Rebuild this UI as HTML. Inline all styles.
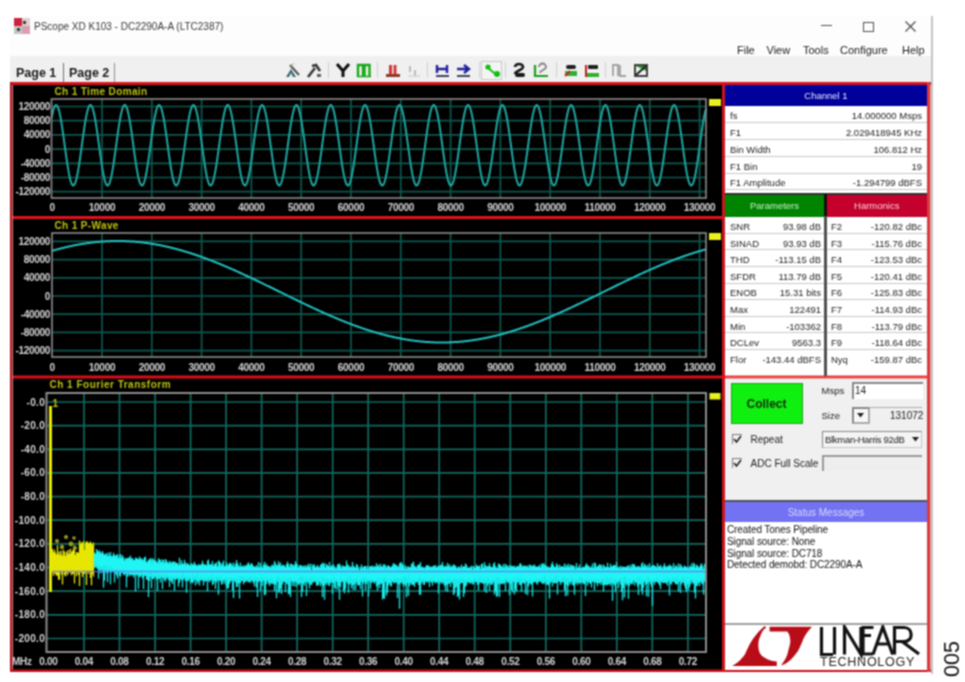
<!DOCTYPE html>
<html><head><meta charset="utf-8">
<style>
html,body{margin:0;padding:0;background:#fff;width:965px;height:682px;overflow:hidden;position:relative;font-family:"Liberation Sans", sans-serif;}
.abs{position:absolute}
svg text{font-family:"Liberation Sans", sans-serif;}
.al{font-size:10px;font-weight:bold;fill:#d4d4d4;letter-spacing:-0.3px}
.ttl{font-size:10px;font-weight:bold;fill:#c0c010;letter-spacing:0.37px}
.hdr{position:absolute;color:#e8e8ff;font-size:9.5px;text-align:center;display:flex;align-items:center;justify-content:center;}
.row,.row2{position:absolute;background:#fff;border-bottom:1px solid #c8c8c8;box-sizing:border-box;font-size:9.5px;color:#1c1c1c;}
.row2{border-bottom:none}
.row span,.row2 span{position:absolute;top:50%;transform:translateY(-38%);white-space:nowrap}
.menu{position:absolute;font-size:11px;color:#202020;white-space:nowrap}
</style></head><body>
<svg width="0" height="0" style="position:absolute"><filter id="bl" x="0" y="0" width="100%" height="100%" color-interpolation-filters="sRGB"><feConvolveMatrix order="3" kernelMatrix="1 2 1 2 4 2 1 2 1" divisor="16" edgeMode="duplicate"/></filter></svg>
<div id="wrap" style="position:absolute;left:0;top:0;width:965px;height:682px;overflow:hidden;background:#fff;filter:url(#bl)">
<div class="abs" style="left:10px;top:15px;width:921px;height:41px;background:#fdfdfd"></div>
<div class="abs" style="left:10px;top:56px;width:921px;height:26px;background:#f0f0f0"></div>
<div class="abs" style="left:931px;top:16px;width:2px;height:658px;background:#c4c4c4"></div>
<svg class="abs" style="left:14px;top:18px" width="16" height="16"><rect x="0" y="0" width="16" height="16" fill="#c8c8c8"/><rect x="0" y="0" width="8" height="8" fill="#d02040"/><rect x="8" y="0" width="8" height="8" fill="#e0d0d0"/><rect x="0" y="8" width="8" height="8" fill="#c0c8c0"/><rect x="8" y="8" width="8" height="8" fill="#d8a0b0"/><rect x="9" y="3" width="3" height="3" fill="#404040"/><rect x="3" y="10" width="3" height="3" fill="#404040"/></svg><div class="menu" style="left:34px;top:21px;font-size:10px;color:#383838">PScope XD K103 - DC2290A-A (LTC2387)</div><div class="abs" style="left:821px;top:25px;width:11px;height:1.2px;background:#505050"></div><div class="abs" style="left:862.5px;top:22px;width:9px;height:8px;border:1.2px solid #505050"></div><svg class="abs" style="left:904px;top:21px" width="13" height="11"><path d="M1.5 0.5L11.5 10.5M11.5 0.5L1.5 10.5" stroke="#505050" stroke-width="1.3"/></svg><div class="menu" style="left:737px;top:44px">File</div><div class="menu" style="left:766.5px;top:44px">View</div><div class="menu" style="left:803px;top:44px">Tools</div><div class="menu" style="left:840px;top:44px">Configure</div><div class="menu" style="left:902px;top:44px">Help</div><div class="menu" style="left:16px;top:66px;font-size:12.5px;font-weight:bold;color:#1a1a1a">Page 1</div><div class="abs" style="left:62.5px;top:63px;width:1.5px;height:19px;background:#707070"></div><div class="menu" style="left:69px;top:66px;font-size:12.5px;font-weight:bold;color:#1a1a1a">Page 2</div><div class="abs" style="left:113.5px;top:63px;width:1.5px;height:19px;background:#909090"></div><svg class="abs" style="left:285px;top:62px" width="16" height="16"><path d="M1 15L6 7L11 15z" fill="#3a6a70"/><path d="M4 15L6 11L8 15z" fill="#f0f0f0"/><path d="M5 3L14 13" stroke="#505050" stroke-width="2"/><path d="M9 1L5 6" stroke="#c0a0a0" stroke-width="1"/></svg><svg class="abs" style="left:306px;top:62px" width="16" height="16"><path d="M2 15L9 6" stroke="#383838" stroke-width="2.6"/><path d="M6 4L10 3L14 9" stroke="#383838" stroke-width="2.6" fill="none"/><rect x="11" y="12" width="4" height="3" fill="#606060"/></svg><div class="abs" style="left:328px;top:62px;width:1px;height:16px;background:#d0d0d0"></div><svg class="abs" style="left:334.5px;top:62px" width="16" height="16"><path d="M2 2L8 9L14 2M8 9V15" stroke="#101010" stroke-width="3" fill="none"/></svg><svg class="abs" style="left:355.5px;top:62px" width="16" height="16"><path d="M2 15V3h5v12M8.5 15V3h5v12" stroke="#18a818" stroke-width="2.4" fill="none"/><path d="M1 14.5h14" stroke="#18a818" stroke-width="1.5"/></svg><div class="abs" style="left:377px;top:62px;width:1px;height:16px;background:#d0d0d0"></div><svg class="abs" style="left:384.5px;top:62px" width="16" height="16"><path d="M5.5 13V3M10 13V3" stroke="#d03838" stroke-width="3"/><rect x="1" y="12" width="14" height="3" fill="#903828"/></svg><svg class="abs" style="left:406px;top:62px" width="16" height="16"><path d="M4 4v6M9 8v6" stroke="#b0b0b0" stroke-width="1.6"/><path d="M2 14h12" stroke="#c8c8c8" stroke-width="1"/></svg><div class="abs" style="left:427px;top:62px;width:1px;height:16px;background:#d0d0d0"></div><svg class="abs" style="left:435px;top:62px" width="16" height="16"><path d="M2 3v8M12 3v8M2 7h10" stroke="#2020a0" stroke-width="2.4"/><path d="M1 14h13" stroke="#404060" stroke-width="2"/></svg><svg class="abs" style="left:456px;top:62px" width="16" height="16"><path d="M1 7h11M8 3l5 4l-5 4" stroke="#2020a0" stroke-width="2.4" fill="none"/><path d="M1 14h13" stroke="#404060" stroke-width="2"/></svg><div class="abs" style="left:478.5px;top:62px;width:1px;height:16px;background:#d0d0d0"></div><div class="abs" style="left:480.5px;top:60.5px;width:19px;height:17px;border:1px solid #c8c8c8;background:#f4f4f4"></div><svg class="abs" style="left:485px;top:62px" width="16" height="16"><path d="M2 5L9 11L14 13" stroke="#10c010" stroke-width="2" fill="none"/><circle cx="3" cy="5" r="2.6" fill="#10c010"/><circle cx="12" cy="12" r="3" fill="#10c010"/></svg><div class="abs" style="left:505px;top:62px;width:1px;height:16px;background:#d0d0d0"></div><svg class="abs" style="left:513px;top:62px" width="16" height="16"><path d="M2 5a4 3 0 0 1 8 0c0 3-8 4-8 7" stroke="#181818" stroke-width="2.6" fill="none"/><rect x="2" y="11" width="10" height="4" rx="2" fill="#181818"/></svg><svg class="abs" style="left:533px;top:62px" width="16" height="16"><path d="M2 3V14h13" stroke="#18a018" stroke-width="2.2" fill="none"/><path d="M6 5a3 3 0 0 1 7 0c0 3-6 3-6 6" stroke="#808080" stroke-width="1.8" fill="none"/></svg><div class="abs" style="left:556px;top:62px;width:1px;height:16px;background:#d0d0d0"></div><svg class="abs" style="left:563px;top:62px" width="16" height="16"><rect x="3" y="3" width="10" height="4" rx="2" fill="#202020"/><rect x="2" y="9" width="12" height="5" fill="#30b030"/><path d="M2 14L7 9" stroke="#d02020" stroke-width="2"/></svg><svg class="abs" style="left:584px;top:62px" width="16" height="16"><path d="M2 3V15" stroke="#c02020" stroke-width="2"/><rect x="4" y="3" width="10" height="4" rx="1" fill="#202020"/><rect x="3" y="11" width="12" height="4" fill="#30b030"/></svg><div class="abs" style="left:605px;top:62px;width:1px;height:16px;background:#d0d0d0"></div><svg class="abs" style="left:612px;top:62px" width="16" height="16"><path d="M1 14V3h5v11M8 3v11h6" stroke="#a0a0a0" stroke-width="1.8" fill="none"/></svg><svg class="abs" style="left:633px;top:62px" width="16" height="16"><rect x="1" y="2" width="14" height="13" fill="#404040"/><rect x="3" y="4" width="10" height="9" fill="#f0f0f0"/><path d="M3 4h10v5z" fill="#20a020"/><path d="M3 13L13 4" stroke="#202020" stroke-width="2"/></svg>
<svg width="965" height="682" style="position:absolute;left:0;top:0"><rect x="13" y="85" width="709" height="585" fill="#000"/><line x1="51.5" y1="106.5" x2="706" y2="106.5" stroke="#0d584e" stroke-width="1.7"/><line x1="51.5" y1="120.7" x2="706" y2="120.7" stroke="#0d584e" stroke-width="1.7"/><line x1="51.5" y1="134.9" x2="706" y2="134.9" stroke="#0d584e" stroke-width="1.7"/><line x1="51.5" y1="149.1" x2="706" y2="149.1" stroke="#0d584e" stroke-width="1.7"/><line x1="51.5" y1="163.3" x2="706" y2="163.3" stroke="#0d584e" stroke-width="1.7"/><line x1="51.5" y1="177.5" x2="706" y2="177.5" stroke="#0d584e" stroke-width="1.7"/><line x1="51.5" y1="191.7" x2="706" y2="191.7" stroke="#0d584e" stroke-width="1.7"/><line x1="102" y1="99" x2="102" y2="198" stroke="#0d584e" stroke-width="1.7"/><line x1="151.8" y1="99" x2="151.8" y2="198" stroke="#0d584e" stroke-width="1.7"/><line x1="201.6" y1="99" x2="201.6" y2="198" stroke="#0d584e" stroke-width="1.7"/><line x1="251.4" y1="99" x2="251.4" y2="198" stroke="#0d584e" stroke-width="1.7"/><line x1="301.2" y1="99" x2="301.2" y2="198" stroke="#0d584e" stroke-width="1.7"/><line x1="351" y1="99" x2="351" y2="198" stroke="#0d584e" stroke-width="1.7"/><line x1="400.8" y1="99" x2="400.8" y2="198" stroke="#0d584e" stroke-width="1.7"/><line x1="450.6" y1="99" x2="450.6" y2="198" stroke="#0d584e" stroke-width="1.7"/><line x1="500.4" y1="99" x2="500.4" y2="198" stroke="#0d584e" stroke-width="1.7"/><line x1="550.2" y1="99" x2="550.2" y2="198" stroke="#0d584e" stroke-width="1.7"/><line x1="600" y1="99" x2="600" y2="198" stroke="#0d584e" stroke-width="1.7"/><line x1="649.8" y1="99" x2="649.8" y2="198" stroke="#0d584e" stroke-width="1.7"/><line x1="699.6" y1="99" x2="699.6" y2="198" stroke="#0d584e" stroke-width="1.7"/><polyline points="51.5,118.5 52,115.9 52.5,113.5 53,111.4 53.5,109.6 54,108 54.5,106.8 55,105.9 55.5,105.3 56,105.1 56.5,105.2 57,105.6 57.5,106.4 58,107.5 58.5,108.9 59,110.6 59.5,112.6 60,114.9 60.5,117.4 61,120.2 61.5,123.2 62,126.3 62.5,129.7 63,133.1 63.5,136.7 64,140.3 64.5,144 65,147.6 65.5,151.3 66,154.9 66.5,158.4 67,161.8 67.5,165.1 68,168.2 68.5,171.2 69,173.9 69.5,176.3 70,178.5 70.5,180.5 71,182.1 71.5,183.4 72,184.4 72.5,185.1 73,185.5 73.5,185.5 74,185.1 74.5,184.5 75,183.5 75.5,182.2 76,180.6 76.5,178.7 77,176.5 77.5,174 78,171.3 78.5,168.4 79,165.3 79.5,162 80,158.6 80.5,155.1 81,151.5 81.5,147.9 82,144.2 82.5,140.5 83,136.9 83.5,133.3 84,129.9 84.5,126.5 85,123.4 85.5,120.4 86,117.6 86.5,115.1 87,112.8 87.5,110.7 88,109 88.5,107.6 89,106.5 89.5,105.7 90,105.2 90.5,105.1 91,105.3 91.5,105.9 92,106.7 92.5,108 93,109.5 93.5,111.3 94,113.4 94.5,115.7 95,118.4 95.5,121.2 96,124.2 96.5,127.5 97,130.8 97.5,134.3 98,137.9 98.5,141.5 99,145.2 99.5,148.9 100,152.5 100.5,156.1 101,159.6 101.5,163 102,166.2 102.5,169.3 103,172.1 103.5,174.7 104,177.1 104.5,179.2 105,181.1 105.5,182.6 106,183.8 106.5,184.7 107,185.3 107.5,185.5 108,185.4 108.5,184.9 109,184.2 109.5,183.1 110,181.7 110.5,180 111,177.9 111.5,175.7 112,173.1 112.5,170.4 113,167.4 113.5,164.2 114,160.9 114.5,157.4 115,153.9 115.5,150.3 116,146.6 116.5,142.9 117,139.3 117.5,135.7 118,132.1 118.5,128.7 119,125.4 119.5,122.3 120,119.4 120.5,116.7 121,114.2 121.5,112 122,110.1 122.5,108.5 123,107.2 123.5,106.2 124,105.5 124.5,105.1 125,105.1 125.5,105.5 126,106.1 126.5,107.1 127,108.4 127.5,110 128,112 128.5,114.2 129,116.6 129.5,119.3 130,122.2 130.5,125.3 131,128.6 131.5,132 132,135.5 132.5,139.1 133,142.8 133.5,146.5 134,150.1 134.5,153.8 135,157.3 135.5,160.8 136,164.1 136.5,167.3 137,170.2 137.5,173 138,175.6 138.5,177.9 139,179.9 139.5,181.6 140,183 140.5,184.1 141,184.9 141.5,185.4 142,185.5 142.5,185.3 143,184.7 143.5,183.8 144,182.6 144.5,181.1 145,179.3 145.5,177.2 146,174.8 146.5,172.2 147,169.4 147.5,166.3 148,163.1 148.5,159.7 149,156.3 149.5,152.7 150,149 150.5,145.4 151,141.7 151.5,138 152,134.5 152.5,131 153,127.6 153.5,124.4 154,121.3 154.5,118.5 155,115.8 155.5,113.5 156,111.4 156.5,109.5 157,108 157.5,106.8 158,105.9 158.5,105.3 159,105.1 159.5,105.2 160,105.7 160.5,106.4 161,107.5 161.5,108.9 162,110.7 162.5,112.7 163,115 163.5,117.5 164,120.3 164.5,123.2 165,126.4 165.5,129.7 166,133.2 166.5,136.7 167,140.4 167.5,144 168,147.7 168.5,151.4 169,155 169.5,158.5 170,161.9 170.5,165.2 171,168.3 171.5,171.2 172,173.9 172.5,176.4 173,178.6 173.5,180.5 174,182.1 174.5,183.4 175,184.4 175.5,185.1 176,185.5 176.5,185.5 177,185.1 177.5,184.5 178,183.5 178.5,182.2 179,180.5 179.5,178.6 180,176.4 180.5,174 181,171.3 181.5,168.4 182,165.3 182.5,162 183,158.6 183.5,155 184,151.4 184.5,147.8 185,144.1 185.5,140.4 186,136.8 186.5,133.3 187,129.8 187.5,126.5 188,123.3 188.5,120.3 189,117.6 189.5,115 190,112.7 190.5,110.7 191,109 191.5,107.6 192,106.5 192.5,105.7 193,105.2 193.5,105.1 194,105.3 194.5,105.9 195,106.8 195.5,108 196,109.5 196.5,111.3 197,113.4 197.5,115.8 198,118.4 198.5,121.3 199,124.3 199.5,127.5 200,130.9 200.5,134.4 201,138 201.5,141.6 202,145.3 202.5,149 203,152.6 203.5,156.2 204,159.7 204.5,163 205,166.3 205.5,169.3 206,172.2 206.5,174.8 207,177.2 207.5,179.3 208,181.1 208.5,182.6 209,183.8 209.5,184.7 210,185.3 210.5,185.5 211,185.4 211.5,184.9 212,184.2 212.5,183.1 213,181.6 213.5,179.9 214,177.9 214.5,175.6 215,173.1 215.5,170.3 216,167.3 216.5,164.2 217,160.8 217.5,157.4 218,153.8 218.5,150.2 219,146.5 219.5,142.9 220,139.2 220.5,135.6 221,132.1 221.5,128.7 222,125.4 222.5,122.3 223,119.4 223.5,116.7 224,114.2 224.5,112 225,110.1 225.5,108.5 226,107.1 226.5,106.1 227,105.5 227.5,105.1 228,105.1 228.5,105.5 229,106.1 229.5,107.1 230,108.5 230.5,110.1 231,112 231.5,114.2 232,116.7 232.5,119.4 233,122.3 233.5,125.4 234,128.7 234.5,132.1 235,135.6 235.5,139.2 236,142.9 236.5,146.5 237,150.2 237.5,153.8 238,157.4 238.5,160.8 239,164.2 239.5,167.3 240,170.3 240.5,173.1 241,175.6 241.5,177.9 242,179.9 242.5,181.6 243,183.1 243.5,184.2 244,184.9 244.5,185.4 245,185.5 245.5,185.3 246,184.7 246.5,183.8 247,182.6 247.5,181.1 248,179.3 248.5,177.2 249,174.8 249.5,172.2 250,169.3 250.5,166.3 251,163 251.5,159.7 252,156.2 252.5,152.6 253,149 253.5,145.3 254,141.6 254.5,138 255,134.4 255.5,130.9 256,127.5 256.5,124.3 257,121.3 257.5,118.4 258,115.8 258.5,113.4 259,111.3 259.5,109.5 260,108 260.5,106.8 261,105.9 261.5,105.3 262,105.1 262.5,105.2 263,105.7 263.5,106.5 264,107.6 264.5,109 265,110.7 265.5,112.7 266,115 266.5,117.6 267,120.3 267.5,123.3 268,126.5 268.5,129.8 269,133.3 269.5,136.8 270,140.4 270.5,144.1 271,147.8 271.5,151.4 272,155 272.5,158.6 273,162 273.5,165.3 274,168.4 274.5,171.3 275,174 275.5,176.4 276,178.6 276.5,180.5 277,182.2 277.5,183.5 278,184.5 278.5,185.1 279,185.5 279.5,185.5 280,185.1 280.5,184.4 281,183.4 281.5,182.1 282,180.5 282.5,178.6 283,176.4 283.5,173.9 284,171.2 284.5,168.3 285,165.2 285.5,161.9 286,158.5 286.5,155 287,151.4 287.5,147.7 288,144 288.5,140.4 289,136.7 289.5,133.2 290,129.7 290.5,126.4 291,123.2 291.5,120.3 292,117.5 292.5,115 293,112.7 293.5,110.7 294,108.9 294.5,107.5 295,106.4 295.5,105.7 296,105.2 296.5,105.1 297,105.3 297.5,105.9 298,106.8 298.5,108 299,109.5 299.5,111.4 300,113.5 300.5,115.8 301,118.5 301.5,121.3 302,124.4 302.5,127.6 303,131 303.5,134.5 304,138 304.5,141.7 305,145.4 305.5,149 306,152.7 306.5,156.3 307,159.7 307.5,163.1 308,166.3 308.5,169.4 309,172.2 309.5,174.8 310,177.2 310.5,179.3 311,181.1 311.5,182.6 312,183.8 312.5,184.7 313,185.3 313.5,185.5 314,185.4 314.5,184.9 315,184.1 315.5,183 316,181.6 316.5,179.9 317,177.9 317.5,175.6 318,173 318.5,170.2 319,167.3 319.5,164.1 320,160.8 320.5,157.3 321,153.8 321.5,150.1 322,146.5 322.5,142.8 323,139.1 323.5,135.5 324,132 324.5,128.6 325,125.3 325.5,122.2 326,119.3 326.5,116.6 327,114.2 327.5,112 328,110 328.5,108.4 329,107.1 329.5,106.1 330,105.5 330.5,105.1 331,105.1 331.5,105.5 332,106.2 332.5,107.2 333,108.5 333.5,110.1 334,112 334.5,114.2 335,116.7 335.5,119.4 336,122.3 336.5,125.4 337,128.7 337.5,132.1 338,135.7 338.5,139.3 339,142.9 339.5,146.6 340,150.3 340.5,153.9 341,157.4 341.5,160.9 342,164.2 342.5,167.4 343,170.4 343.5,173.1 344,175.7 344.5,177.9 345,180 345.5,181.7 346,183.1 346.5,184.2 347,184.9 347.5,185.4 348,185.5 348.5,185.3 349,184.7 349.5,183.8 350,182.6 350.5,181.1 351,179.2 351.5,177.1 352,174.7 352.5,172.1 353,169.3 353.5,166.2 354,163 354.5,159.6 355,156.1 355.5,152.5 356,148.9 356.5,145.2 357,141.5 357.5,137.9 358,134.3 358.5,130.8 359,127.5 359.5,124.2 360,121.2 360.5,118.4 361,115.7 361.5,113.4 362,111.3 362.5,109.5 363,108 363.5,106.7 364,105.9 364.5,105.3 365,105.1 365.5,105.2 366,105.7 366.5,106.5 367,107.6 367.5,109 368,110.7 368.5,112.8 369,115.1 369.5,117.6 370,120.4 370.5,123.4 371,126.5 371.5,129.9 372,133.3 372.5,136.9 373,140.5 373.5,144.2 374,147.9 374.5,151.5 375,155.1 375.5,158.6 376,162 376.5,165.3 377,168.4 377.5,171.3 378,174 378.5,176.5 379,178.7 379.5,180.6 380,182.2 380.5,183.5 381,184.5 381.5,185.1 382,185.5 382.5,185.5 383,185.1 383.5,184.4 384,183.4 384.5,182.1 385,180.5 385.5,178.5 386,176.3 386.5,173.9 387,171.2 387.5,168.2 388,165.1 388.5,161.8 389,158.4 389.5,154.9 390,151.3 390.5,147.6 391,144 391.5,140.3 392,136.7 392.5,133.1 393,129.7 393.5,126.3 394,123.2 394.5,120.2 395,117.4 395.5,114.9 396,112.6 396.5,110.6 397,108.9 397.5,107.5 398,106.4 398.5,105.6 399,105.2 399.5,105.1 400,105.3 400.5,105.9 401,106.8 401.5,108 402,109.6 402.5,111.4 403,113.5 403.5,115.9 404,118.5 404.5,121.4 405,124.4 405.5,127.7 406,131 406.5,134.5 407,138.1 407.5,141.8 408,145.4 408.5,149.1 409,152.7 409.5,156.3 410,159.8 410.5,163.2 411,166.4 411.5,169.4 412,172.3 412.5,174.9 413,177.2 413.5,179.3 414,181.2 414.5,182.7 415,183.9 415.5,184.7 416,185.3 416.5,185.5 417,185.4 417.5,184.9 418,184.1 418.5,183 419,181.6 419.5,179.8 420,177.8 420.5,175.5 421,173 421.5,170.2 422,167.2 422.5,164 423,160.7 423.5,157.2 424,153.7 424.5,150.1 425,146.4 425.5,142.7 426,139.1 426.5,135.5 427,131.9 427.5,128.5 428,125.3 428.5,122.2 429,119.2 429.5,116.6 430,114.1 430.5,111.9 431,110 431.5,108.4 432,107.1 432.5,106.1 433,105.5 433.5,105.1 434,105.1 434.5,105.5 435,106.2 435.5,107.2 436,108.5 436.5,110.2 437,112.1 437.5,114.3 438,116.8 438.5,119.5 439,122.4 439.5,125.5 440,128.8 440.5,132.2 441,135.7 441.5,139.3 442,143 442.5,146.7 443,150.3 443.5,154 444,157.5 444.5,161 445,164.3 445.5,167.4 446,170.4 446.5,173.2 447,175.7 447.5,178 448,180 448.5,181.7 449,183.1 449.5,184.2 450,185 450.5,185.4 451,185.5 451.5,185.3 452,184.7 452.5,183.8 453,182.6 453.5,181 454,179.2 454.5,177.1 455,174.7 455.5,172 456,169.2 456.5,166.1 457,162.9 457.5,159.5 458,156 458.5,152.5 459,148.8 459.5,145.1 460,141.5 460.5,137.8 461,134.2 461.5,130.8 462,127.4 462.5,124.2 463,121.1 463.5,118.3 464,115.7 464.5,113.3 465,111.2 465.5,109.4 466,107.9 466.5,106.7 467,105.9 467.5,105.3 468,105.1 468.5,105.2 469,105.7 469.5,106.5 470,107.6 470.5,109 471,110.8 471.5,112.8 472,115.1 472.5,117.7 473,120.4 473.5,123.4 474,126.6 474.5,129.9 475,133.4 475.5,137 476,140.6 476.5,144.3 477,147.9 477.5,151.6 478,155.2 478.5,158.7 479,162.1 479.5,165.4 480,168.5 480.5,171.4 481,174.1 481.5,176.5 482,178.7 482.5,180.6 483,182.2 483.5,183.5 484,184.5 484.5,185.1 485,185.5 485.5,185.4 486,185.1 486.5,184.4 487,183.4 487.5,182.1 488,180.4 488.5,178.5 489,176.3 489.5,173.8 490,171.1 490.5,168.2 491,165.1 491.5,161.8 492,158.4 492.5,154.8 493,151.2 493.5,147.6 494,143.9 494.5,140.2 495,136.6 495.5,133 496,129.6 496.5,126.3 497,123.1 497.5,120.2 498,117.4 498.5,114.9 499,112.6 499.5,110.6 500,108.9 500.5,107.5 501,106.4 501.5,105.6 502,105.2 502.5,105.1 503,105.4 503.5,105.9 504,106.8 504.5,108.1 505,109.6 505.5,111.4 506,113.6 506.5,115.9 507,118.6 507.5,121.4 508,124.5 508.5,127.7 509,131.1 509.5,134.6 510,138.2 510.5,141.8 511,145.5 511.5,149.2 512,152.8 512.5,156.4 513,159.9 513.5,163.2 514,166.5 514.5,169.5 515,172.3 515.5,174.9 516,177.3 516.5,179.4 517,181.2 517.5,182.7 518,183.9 518.5,184.8 519,185.3 519.5,185.5 520,185.4 520.5,184.9 521,184.1 521.5,183 522,181.5 522.5,179.8 523,177.8 523.5,175.5 524,172.9 524.5,170.1 525,167.1 525.5,164 526,160.6 526.5,157.2 527,153.6 527.5,150 528,146.3 528.5,142.6 529,139 529.5,135.4 530,131.9 530.5,128.5 531,125.2 531.5,122.1 532,119.2 532.5,116.5 533,114.1 533.5,111.9 534,110 534.5,108.4 535,107.1 535.5,106.1 536,105.4 536.5,105.1 537,105.2 537.5,105.5 538,106.2 538.5,107.2 539,108.5 539.5,110.2 540,112.1 540.5,114.3 541,116.8 541.5,119.5 542,122.5 542.5,125.6 543,128.9 543.5,132.3 544,135.8 544.5,139.4 545,143.1 545.5,146.8 546,150.4 546.5,154 547,157.6 547.5,161 548,164.4 548.5,167.5 549,170.5 549.5,173.2 550,175.8 550.5,178 551,180 551.5,181.7 552,183.1 552.5,184.2 553,185 553.5,185.4 554,185.5 554.5,185.2 555,184.7 555.5,183.8 556,182.5 556.5,181 557,179.1 557.5,177 558,174.6 558.5,172 559,169.1 559.5,166.1 560,162.8 560.5,159.5 561,156 561.5,152.4 562,148.7 562.5,145.1 563,141.4 563.5,137.7 564,134.2 564.5,130.7 565,127.3 565.5,124.1 566,121.1 566.5,118.3 567,115.6 567.5,113.3 568,111.2 568.5,109.4 569,107.9 569.5,106.7 570,105.8 570.5,105.3 571,105.1 571.5,105.2 572,105.7 572.5,106.5 573,107.6 573.5,109.1 574,110.8 574.5,112.9 575,115.2 575.5,117.7 576,120.5 576.5,123.5 577,126.7 577.5,130 578,133.5 578.5,137 579,140.7 579.5,144.3 580,148 580.5,151.7 581,155.3 581.5,158.8 582,162.2 582.5,165.4 583,168.5 583.5,171.4 584,174.1 584.5,176.6 585,178.7 585.5,180.6 586,182.2 586.5,183.5 587,184.5 587.5,185.2 588,185.5 588.5,185.4 589,185.1 589.5,184.4 590,183.4 590.5,182 591,180.4 591.5,178.5 592,176.2 592.5,173.8 593,171 593.5,168.1 594,165 594.5,161.7 595,158.3 595.5,154.8 596,151.1 596.5,147.5 597,143.8 597.5,140.1 598,136.5 598.5,133 599,129.5 599.5,126.2 600,123.1 600.5,120.1 601,117.3 601.5,114.8 602,112.5 602.5,110.6 603,108.9 603.5,107.5 604,106.4 604.5,105.6 605,105.2 605.5,105.1 606,105.4 606.5,105.9 607,106.9 607.5,108.1 608,109.6 608.5,111.5 609,113.6 609.5,116 610,118.6 610.5,121.5 611,124.6 611.5,127.8 612,131.2 612.5,134.7 613,138.3 613.5,141.9 614,145.6 614.5,149.2 615,152.9 615.5,156.5 616,159.9 616.5,163.3 617,166.5 617.5,169.5 618,172.4 618.5,175 619,177.3 619.5,179.4 620,181.2 620.5,182.7 621,183.9 621.5,184.8 622,185.3 622.5,185.5 623,185.4 623.5,184.9 624,184.1 624.5,183 625,181.5 625.5,179.8 626,177.7 626.5,175.4 627,172.9 627.5,170.1 628,167.1 628.5,163.9 629,160.6 629.5,157.1 630,153.5 630.5,149.9 631,146.2 631.5,142.6 632,138.9 632.5,135.3 633,131.8 633.5,128.4 634,125.1 634.5,122 635,119.1 635.5,116.5 636,114 636.5,111.8 637,109.9 637.5,108.3 638,107.1 638.5,106.1 639,105.4 639.5,105.1 640,105.2 640.5,105.5 641,106.2 641.5,107.2 642,108.6 642.5,110.2 643,112.2 643.5,114.4 644,116.9 644.5,119.6 645,122.5 645.5,125.6 646,128.9 646.5,132.3 647,135.9 647.5,139.5 648,143.1 648.5,146.8 649,150.5 649.5,154.1 650,157.7 650.5,161.1 651,164.4 651.5,167.6 652,170.5 652.5,173.3 653,175.8 653.5,178.1 654,180.1 654.5,181.8 655,183.2 655.5,184.2 656,185 656.5,185.4 657,185.5 657.5,185.2 658,184.7 658.5,183.7 659,182.5 659.5,180.9 660,179.1 660.5,177 661,174.6 661.5,171.9 662,169.1 662.5,166 663,162.8 663.5,159.4 664,155.9 664.5,152.3 665,148.7 665.5,145 666,141.3 666.5,137.7 667,134.1 667.5,130.6 668,127.3 668.5,124.1 669,121 669.5,118.2 670,115.6 670.5,113.2 671,111.2 671.5,109.4 672,107.9 672.5,106.7 673,105.8 673.5,105.3 674,105.1 674.5,105.2 675,105.7 675.5,106.5 676,107.7 676.5,109.1 677,110.9 677.5,112.9 678,115.2 678.5,117.8 679,120.6 679.5,123.6 680,126.7 680.5,130.1 681,133.5 681.5,137.1 682,140.7 682.5,144.4 683,148.1 683.5,151.7 684,155.3 684.5,158.8 685,162.2 685.5,165.5 686,168.6 686.5,171.5 687,174.2 687.5,176.6 688,178.8 688.5,180.7 689,182.3 689.5,183.6 690,184.5 690.5,185.2 691,185.5 691.5,185.4 692,185.1 692.5,184.4 693,183.4 693.5,182 694,180.4 694.5,178.4 695,176.2 695.5,173.7 696,171 696.5,168.1 697,164.9 697.5,161.6 698,158.2 698.5,154.7 699,151.1 699.5,147.4 700,143.7 700.5,140.1 701,136.5 701.5,132.9 702,129.5 702.5,126.2 703,123 703.5,120 704,117.3 704.5,114.8 705,112.5 705.5,110.5 706,108.8" fill="none" stroke="#20a8a2" stroke-width="2"/><rect x="51.5" y="99" width="654.5" height="99" fill="none" stroke="#8c8c8c" stroke-width="1.6"/><text x="50" y="110" text-anchor="end" class="al">120000</text><text x="50" y="124.2" text-anchor="end" class="al">80000</text><text x="50" y="138.4" text-anchor="end" class="al">40000</text><text x="50" y="152.6" text-anchor="end" class="al">0</text><text x="50" y="166.8" text-anchor="end" class="al">-40000</text><text x="50" y="181" text-anchor="end" class="al">-80000</text><text x="50" y="195.2" text-anchor="end" class="al">-120000</text><text x="52.2" y="211" text-anchor="middle" class="al">0</text><text x="102" y="211" text-anchor="middle" class="al">10000</text><text x="151.8" y="211" text-anchor="middle" class="al">20000</text><text x="201.6" y="211" text-anchor="middle" class="al">30000</text><text x="251.4" y="211" text-anchor="middle" class="al">40000</text><text x="301.2" y="211" text-anchor="middle" class="al">50000</text><text x="351" y="211" text-anchor="middle" class="al">60000</text><text x="400.8" y="211" text-anchor="middle" class="al">70000</text><text x="450.6" y="211" text-anchor="middle" class="al">80000</text><text x="500.4" y="211" text-anchor="middle" class="al">90000</text><text x="550.2" y="211" text-anchor="middle" class="al">100000</text><text x="600" y="211" text-anchor="middle" class="al">110000</text><text x="649.8" y="211" text-anchor="middle" class="al">120000</text><text x="699.6" y="211" text-anchor="middle" class="al">130000</text><text x="54.5" y="94.9" class="ttl">Ch 1 Time Domain</text><rect x="709" y="99" width="12" height="7" fill="#e8f020"/><line x1="52" y1="241.4" x2="706" y2="241.4" stroke="#0d584e" stroke-width="1.7"/><line x1="52" y1="259.6" x2="706" y2="259.6" stroke="#0d584e" stroke-width="1.7"/><line x1="52" y1="277.8" x2="706" y2="277.8" stroke="#0d584e" stroke-width="1.7"/><line x1="52" y1="296" x2="706" y2="296" stroke="#0d584e" stroke-width="1.7"/><line x1="52" y1="314.2" x2="706" y2="314.2" stroke="#0d584e" stroke-width="1.7"/><line x1="52" y1="332.4" x2="706" y2="332.4" stroke="#0d584e" stroke-width="1.7"/><line x1="52" y1="350.6" x2="706" y2="350.6" stroke="#0d584e" stroke-width="1.7"/><line x1="102" y1="233" x2="102" y2="357" stroke="#0d584e" stroke-width="1.7"/><line x1="151.8" y1="233" x2="151.8" y2="357" stroke="#0d584e" stroke-width="1.7"/><line x1="201.6" y1="233" x2="201.6" y2="357" stroke="#0d584e" stroke-width="1.7"/><line x1="251.4" y1="233" x2="251.4" y2="357" stroke="#0d584e" stroke-width="1.7"/><line x1="301.2" y1="233" x2="301.2" y2="357" stroke="#0d584e" stroke-width="1.7"/><line x1="351" y1="233" x2="351" y2="357" stroke="#0d584e" stroke-width="1.7"/><line x1="400.8" y1="233" x2="400.8" y2="357" stroke="#0d584e" stroke-width="1.7"/><line x1="450.6" y1="233" x2="450.6" y2="357" stroke="#0d584e" stroke-width="1.7"/><line x1="500.4" y1="233" x2="500.4" y2="357" stroke="#0d584e" stroke-width="1.7"/><line x1="550.2" y1="233" x2="550.2" y2="357" stroke="#0d584e" stroke-width="1.7"/><line x1="600" y1="233" x2="600" y2="357" stroke="#0d584e" stroke-width="1.7"/><line x1="649.8" y1="233" x2="649.8" y2="357" stroke="#0d584e" stroke-width="1.7"/><line x1="699.6" y1="233" x2="699.6" y2="357" stroke="#0d584e" stroke-width="1.7"/><polyline points="52,250.9 52.5,250.7 53,250.6 53.5,250.5 54,250.3 54.5,250.2 55,250 55.5,249.9 56,249.7 56.5,249.6 57,249.5 57.5,249.3 58,249.2 58.5,249.1 59,248.9 59.5,248.8 60,248.7 60.5,248.5 61,248.4 61.5,248.3 62,248.2 62.5,248 63,247.9 63.5,247.8 64,247.7 64.5,247.5 65,247.4 65.5,247.3 66,247.2 66.5,247.1 67,247 67.5,246.8 68,246.7 68.5,246.6 69,246.5 69.5,246.4 70,246.3 70.5,246.2 71,246.1 71.5,246 72,245.9 72.5,245.7 73,245.6 73.5,245.5 74,245.4 74.5,245.3 75,245.2 75.5,245.1 76,245 76.5,245 77,244.9 77.5,244.8 78,244.7 78.5,244.6 79,244.5 79.5,244.4 80,244.3 80.5,244.2 81,244.1 81.5,244.1 82,244 82.5,243.9 83,243.8 83.5,243.7 84,243.7 84.5,243.6 85,243.5 85.5,243.4 86,243.3 86.5,243.3 87,243.2 87.5,243.1 88,243.1 88.5,243 89,242.9 89.5,242.9 90,242.8 90.5,242.7 91,242.7 91.5,242.6 92,242.5 92.5,242.5 93,242.4 93.5,242.4 94,242.3 94.5,242.3 95,242.2 95.5,242.1 96,242.1 96.5,242 97,242 97.5,242 98,241.9 98.5,241.9 99,241.8 99.5,241.8 100,241.7 100.5,241.7 101,241.6 101.5,241.6 102,241.6 102.5,241.5 103,241.5 103.5,241.5 104,241.4 104.5,241.4 105,241.4 105.5,241.3 106,241.3 106.5,241.3 107,241.3 107.5,241.2 108,241.2 108.5,241.2 109,241.2 109.5,241.2 110,241.1 110.5,241.1 111,241.1 111.5,241.1 112,241.1 112.5,241.1 113,241 113.5,241 114,241 114.5,241 115,241 115.5,241 116,241 116.5,241 117,241 117.5,241 118,241 118.5,241 119,241 119.5,241 120,241 120.5,241 121,241 121.5,241 122,241 122.5,241.1 123,241.1 123.5,241.1 124,241.1 124.5,241.1 125,241.1 125.5,241.2 126,241.2 126.5,241.2 127,241.2 127.5,241.2 128,241.3 128.5,241.3 129,241.3 129.5,241.3 130,241.4 130.5,241.4 131,241.4 131.5,241.5 132,241.5 132.5,241.5 133,241.6 133.5,241.6 134,241.6 134.5,241.7 135,241.7 135.5,241.8 136,241.8 136.5,241.9 137,241.9 137.5,242 138,242 138.5,242 139,242.1 139.5,242.1 140,242.2 140.5,242.3 141,242.3 141.5,242.4 142,242.4 142.5,242.5 143,242.5 143.5,242.6 144,242.7 144.5,242.7 145,242.8 145.5,242.9 146,242.9 146.5,243 147,243.1 147.5,243.1 148,243.2 148.5,243.3 149,243.3 149.5,243.4 150,243.5 150.5,243.6 151,243.7 151.5,243.7 152,243.8 152.5,243.9 153,244 153.5,244.1 154,244.1 154.5,244.2 155,244.3 155.5,244.4 156,244.5 156.5,244.6 157,244.7 157.5,244.8 158,244.9 158.5,245 159,245 159.5,245.1 160,245.2 160.5,245.3 161,245.4 161.5,245.5 162,245.6 162.5,245.7 163,245.9 163.5,246 164,246.1 164.5,246.2 165,246.3 165.5,246.4 166,246.5 166.5,246.6 167,246.7 167.5,246.8 168,247 168.5,247.1 169,247.2 169.5,247.3 170,247.4 170.5,247.5 171,247.7 171.5,247.8 172,247.9 172.5,248 173,248.2 173.5,248.3 174,248.4 174.5,248.5 175,248.7 175.5,248.8 176,248.9 176.5,249.1 177,249.2 177.5,249.3 178,249.5 178.5,249.6 179,249.7 179.5,249.9 180,250 180.5,250.2 181,250.3 181.5,250.5 182,250.6 182.5,250.7 183,250.9 183.5,251 184,251.2 184.5,251.3 185,251.5 185.5,251.6 186,251.8 186.5,251.9 187,252.1 187.5,252.2 188,252.4 188.5,252.5 189,252.7 189.5,252.9 190,253 190.5,253.2 191,253.3 191.5,253.5 192,253.7 192.5,253.8 193,254 193.5,254.2 194,254.3 194.5,254.5 195,254.7 195.5,254.8 196,255 196.5,255.2 197,255.3 197.5,255.5 198,255.7 198.5,255.8 199,256 199.5,256.2 200,256.4 200.5,256.5 201,256.7 201.5,256.9 202,257.1 202.5,257.3 203,257.4 203.5,257.6 204,257.8 204.5,258 205,258.2 205.5,258.4 206,258.5 206.5,258.7 207,258.9 207.5,259.1 208,259.3 208.5,259.5 209,259.7 209.5,259.9 210,260.1 210.5,260.3 211,260.4 211.5,260.6 212,260.8 212.5,261 213,261.2 213.5,261.4 214,261.6 214.5,261.8 215,262 215.5,262.2 216,262.4 216.5,262.6 217,262.8 217.5,263 218,263.2 218.5,263.4 219,263.6 219.5,263.8 220,264 220.5,264.2 221,264.5 221.5,264.7 222,264.9 222.5,265.1 223,265.3 223.5,265.5 224,265.7 224.5,265.9 225,266.1 225.5,266.3 226,266.6 226.5,266.8 227,267 227.5,267.2 228,267.4 228.5,267.6 229,267.9 229.5,268.1 230,268.3 230.5,268.5 231,268.7 231.5,268.9 232,269.2 232.5,269.4 233,269.6 233.5,269.8 234,270 234.5,270.3 235,270.5 235.5,270.7 236,270.9 236.5,271.2 237,271.4 237.5,271.6 238,271.8 238.5,272.1 239,272.3 239.5,272.5 240,272.7 240.5,273 241,273.2 241.5,273.4 242,273.7 242.5,273.9 243,274.1 243.5,274.4 244,274.6 244.5,274.8 245,275.1 245.5,275.3 246,275.5 246.5,275.7 247,276 247.5,276.2 248,276.5 248.5,276.7 249,276.9 249.5,277.2 250,277.4 250.5,277.6 251,277.9 251.5,278.1 252,278.3 252.5,278.6 253,278.8 253.5,279.1 254,279.3 254.5,279.5 255,279.8 255.5,280 256,280.2 256.5,280.5 257,280.7 257.5,281 258,281.2 258.5,281.4 259,281.7 259.5,281.9 260,282.2 260.5,282.4 261,282.7 261.5,282.9 262,283.1 262.5,283.4 263,283.6 263.5,283.9 264,284.1 264.5,284.4 265,284.6 265.5,284.8 266,285.1 266.5,285.3 267,285.6 267.5,285.8 268,286.1 268.5,286.3 269,286.5 269.5,286.8 270,287 270.5,287.3 271,287.5 271.5,287.8 272,288 272.5,288.3 273,288.5 273.5,288.8 274,289 274.5,289.2 275,289.5 275.5,289.7 276,290 276.5,290.2 277,290.5 277.5,290.7 278,291 278.5,291.2 279,291.5 279.5,291.7 280,291.9 280.5,292.2 281,292.4 281.5,292.7 282,292.9 282.5,293.2 283,293.4 283.5,293.7 284,293.9 284.5,294.2 285,294.4 285.5,294.6 286,294.9 286.5,295.1 287,295.4 287.5,295.6 288,295.9 288.5,296.1 289,296.4 289.5,296.6 290,296.9 290.5,297.1 291,297.3 291.5,297.6 292,297.8 292.5,298.1 293,298.3 293.5,298.6 294,298.8 294.5,299.1 295,299.3 295.5,299.5 296,299.8 296.5,300 297,300.3 297.5,300.5 298,300.8 298.5,301 299,301.2 299.5,301.5 300,301.7 300.5,302 301,302.2 301.5,302.4 302,302.7 302.5,302.9 303,303.2 303.5,303.4 304,303.6 304.5,303.9 305,304.1 305.5,304.4 306,304.6 306.5,304.8 307,305.1 307.5,305.3 308,305.5 308.5,305.8 309,306 309.5,306.2 310,306.5 310.5,306.7 311,307 311.5,307.2 312,307.4 312.5,307.7 313,307.9 313.5,308.1 314,308.4 314.5,308.6 315,308.8 315.5,309.1 316,309.3 316.5,309.5 317,309.7 317.5,310 318,310.2 318.5,310.4 319,310.7 319.5,310.9 320,311.1 320.5,311.3 321,311.6 321.5,311.8 322,312 322.5,312.2 323,312.5 323.5,312.7 324,312.9 324.5,313.1 325,313.4 325.5,313.6 326,313.8 326.5,314 327,314.2 327.5,314.5 328,314.7 328.5,314.9 329,315.1 329.5,315.3 330,315.6 330.5,315.8 331,316 331.5,316.2 332,316.4 332.5,316.6 333,316.9 333.5,317.1 334,317.3 334.5,317.5 335,317.7 335.5,317.9 336,318.1 336.5,318.3 337,318.5 337.5,318.8 338,319 338.5,319.2 339,319.4 339.5,319.6 340,319.8 340.5,320 341,320.2 341.5,320.4 342,320.6 342.5,320.8 343,321 343.5,321.2 344,321.4 344.5,321.6 345,321.8 345.5,322 346,322.2 346.5,322.4 347,322.6 347.5,322.8 348,323 348.5,323.2 349,323.4 349.5,323.6 350,323.7 350.5,323.9 351,324.1 351.5,324.3 352,324.5 352.5,324.7 353,324.9 353.5,325.1 354,325.3 354.5,325.4 355,325.6 355.5,325.8 356,326 356.5,326.2 357,326.3 357.5,326.5 358,326.7 358.5,326.9 359,327.1 359.5,327.2 360,327.4 360.5,327.6 361,327.8 361.5,327.9 362,328.1 362.5,328.3 363,328.4 363.5,328.6 364,328.8 364.5,328.9 365,329.1 365.5,329.3 366,329.4 366.5,329.6 367,329.8 367.5,329.9 368,330.1 368.5,330.3 369,330.4 369.5,330.6 370,330.7 370.5,330.9 371,331 371.5,331.2 372,331.4 372.5,331.5 373,331.7 373.5,331.8 374,332 374.5,332.1 375,332.3 375.5,332.4 376,332.6 376.5,332.7 377,332.8 377.5,333 378,333.1 378.5,333.3 379,333.4 379.5,333.6 380,333.7 380.5,333.8 381,334 381.5,334.1 382,334.2 382.5,334.4 383,334.5 383.5,334.6 384,334.8 384.5,334.9 385,335 385.5,335.2 386,335.3 386.5,335.4 387,335.5 387.5,335.7 388,335.8 388.5,335.9 389,336 389.5,336.1 390,336.3 390.5,336.4 391,336.5 391.5,336.6 392,336.7 392.5,336.8 393,337 393.5,337.1 394,337.2 394.5,337.3 395,337.4 395.5,337.5 396,337.6 396.5,337.7 397,337.8 397.5,337.9 398,338 398.5,338.1 399,338.2 399.5,338.3 400,338.4 400.5,338.5 401,338.6 401.5,338.7 402,338.8 402.5,338.9 403,339 403.5,339.1 404,339.2 404.5,339.2 405,339.3 405.5,339.4 406,339.5 406.5,339.6 407,339.7 407.5,339.7 408,339.8 408.5,339.9 409,340 409.5,340 410,340.1 410.5,340.2 411,340.3 411.5,340.3 412,340.4 412.5,340.5 413,340.5 413.5,340.6 414,340.7 414.5,340.7 415,340.8 415.5,340.9 416,340.9 416.5,341 417,341.1 417.5,341.1 418,341.2 418.5,341.2 419,341.3 419.5,341.3 420,341.4 420.5,341.4 421,341.5 421.5,341.5 422,341.6 422.5,341.6 423,341.7 423.5,341.7 424,341.8 424.5,341.8 425,341.8 425.5,341.9 426,341.9 426.5,342 427,342 427.5,342 428,342.1 428.5,342.1 429,342.1 429.5,342.1 430,342.2 430.5,342.2 431,342.2 431.5,342.3 432,342.3 432.5,342.3 433,342.3 433.5,342.3 434,342.4 434.5,342.4 435,342.4 435.5,342.4 436,342.4 436.5,342.4 437,342.4 437.5,342.5 438,342.5 438.5,342.5 439,342.5 439.5,342.5 440,342.5 440.5,342.5 441,342.5 441.5,342.5 442,342.5 442.5,342.5 443,342.5 443.5,342.5 444,342.5 444.5,342.5 445,342.5 445.5,342.5 446,342.5 446.5,342.4 447,342.4 447.5,342.4 448,342.4 448.5,342.4 449,342.4 449.5,342.4 450,342.3 450.5,342.3 451,342.3 451.5,342.3 452,342.2 452.5,342.2 453,342.2 453.5,342.2 454,342.1 454.5,342.1 455,342.1 455.5,342 456,342 456.5,342 457,341.9 457.5,341.9 458,341.9 458.5,341.8 459,341.8 459.5,341.7 460,341.7 460.5,341.7 461,341.6 461.5,341.6 462,341.5 462.5,341.5 463,341.4 463.5,341.4 464,341.3 464.5,341.3 465,341.2 465.5,341.2 466,341.1 466.5,341 467,341 467.5,340.9 468,340.9 468.5,340.8 469,340.7 469.5,340.7 470,340.6 470.5,340.5 471,340.5 471.5,340.4 472,340.3 472.5,340.3 473,340.2 473.5,340.1 474,340 474.5,340 475,339.9 475.5,339.8 476,339.7 476.5,339.6 477,339.6 477.5,339.5 478,339.4 478.5,339.3 479,339.2 479.5,339.1 480,339 480.5,339 481,338.9 481.5,338.8 482,338.7 482.5,338.6 483,338.5 483.5,338.4 484,338.3 484.5,338.2 485,338.1 485.5,338 486,337.9 486.5,337.8 487,337.7 487.5,337.6 488,337.5 488.5,337.4 489,337.3 489.5,337.2 490,337 490.5,336.9 491,336.8 491.5,336.7 492,336.6 492.5,336.5 493,336.4 493.5,336.2 494,336.1 494.5,336 495,335.9 495.5,335.8 496,335.6 496.5,335.5 497,335.4 497.5,335.3 498,335.1 498.5,335 499,334.9 499.5,334.7 500,334.6 500.5,334.5 501,334.3 501.5,334.2 502,334.1 502.5,333.9 503,333.8 503.5,333.7 504,333.5 504.5,333.4 505,333.2 505.5,333.1 506,333 506.5,332.8 507,332.7 507.5,332.5 508,332.4 508.5,332.2 509,332.1 509.5,331.9 510,331.8 510.5,331.6 511,331.5 511.5,331.3 512,331.2 512.5,331 513,330.9 513.5,330.7 514,330.5 514.5,330.4 515,330.2 515.5,330.1 516,329.9 516.5,329.7 517,329.6 517.5,329.4 518,329.2 518.5,329.1 519,328.9 519.5,328.7 520,328.6 520.5,328.4 521,328.2 521.5,328.1 522,327.9 522.5,327.7 523,327.5 523.5,327.4 524,327.2 524.5,327 525,326.8 525.5,326.7 526,326.5 526.5,326.3 527,326.1 527.5,325.9 528,325.8 528.5,325.6 529,325.4 529.5,325.2 530,325 530.5,324.8 531,324.7 531.5,324.5 532,324.3 532.5,324.1 533,323.9 533.5,323.7 534,323.5 534.5,323.3 535,323.1 535.5,322.9 536,322.7 536.5,322.6 537,322.4 537.5,322.2 538,322 538.5,321.8 539,321.6 539.5,321.4 540,321.2 540.5,321 541,320.8 541.5,320.6 542,320.4 542.5,320.2 543,320 543.5,319.7 544,319.5 544.5,319.3 545,319.1 545.5,318.9 546,318.7 546.5,318.5 547,318.3 547.5,318.1 548,317.9 548.5,317.7 549,317.5 549.5,317.2 550,317 550.5,316.8 551,316.6 551.5,316.4 552,316.2 552.5,316 553,315.7 553.5,315.5 554,315.3 554.5,315.1 555,314.9 555.5,314.6 556,314.4 556.5,314.2 557,314 557.5,313.8 558,313.5 558.5,313.3 559,313.1 559.5,312.9 560,312.6 560.5,312.4 561,312.2 561.5,312 562,311.7 562.5,311.5 563,311.3 563.5,311.1 564,310.8 564.5,310.6 565,310.4 565.5,310.2 566,309.9 566.5,309.7 567,309.5 567.5,309.2 568,309 568.5,308.8 569,308.5 569.5,308.3 570,308.1 570.5,307.8 571,307.6 571.5,307.4 572,307.1 572.5,306.9 573,306.7 573.5,306.4 574,306.2 574.5,306 575,305.7 575.5,305.5 576,305.3 576.5,305 577,304.8 577.5,304.5 578,304.3 578.5,304.1 579,303.8 579.5,303.6 580,303.4 580.5,303.1 581,302.9 581.5,302.6 582,302.4 582.5,302.2 583,301.9 583.5,301.7 584,301.4 584.5,301.2 585,300.9 585.5,300.7 586,300.5 586.5,300.2 587,300 587.5,299.7 588,299.5 588.5,299.2 589,299 589.5,298.8 590,298.5 590.5,298.3 591,298 591.5,297.8 592,297.5 592.5,297.3 593,297.1 593.5,296.8 594,296.6 594.5,296.3 595,296.1 595.5,295.8 596,295.6 596.5,295.3 597,295.1 597.5,294.8 598,294.6 598.5,294.4 599,294.1 599.5,293.9 600,293.6 600.5,293.4 601,293.1 601.5,292.9 602,292.6 602.5,292.4 603,292.1 603.5,291.9 604,291.7 604.5,291.4 605,291.2 605.5,290.9 606,290.7 606.5,290.4 607,290.2 607.5,289.9 608,289.7 608.5,289.4 609,289.2 609.5,288.9 610,288.7 610.5,288.5 611,288.2 611.5,288 612,287.7 612.5,287.5 613,287.2 613.5,287 614,286.7 614.5,286.5 615,286.3 615.5,286 616,285.8 616.5,285.5 617,285.3 617.5,285 618,284.8 618.5,284.5 619,284.3 619.5,284.1 620,283.8 620.5,283.6 621,283.3 621.5,283.1 622,282.8 622.5,282.6 623,282.4 623.5,282.1 624,281.9 624.5,281.6 625,281.4 625.5,281.2 626,280.9 626.5,280.7 627,280.4 627.5,280.2 628,280 628.5,279.7 629,279.5 629.5,279.2 630,279 630.5,278.8 631,278.5 631.5,278.3 632,278.1 632.5,277.8 633,277.6 633.5,277.3 634,277.1 634.5,276.9 635,276.6 635.5,276.4 636,276.2 636.5,275.9 637,275.7 637.5,275.5 638,275.2 638.5,275 639,274.8 639.5,274.5 640,274.3 640.5,274.1 641,273.8 641.5,273.6 642,273.4 642.5,273.2 643,272.9 643.5,272.7 644,272.5 644.5,272.2 645,272 645.5,271.8 646,271.6 646.5,271.3 647,271.1 647.5,270.9 648,270.7 648.5,270.4 649,270.2 649.5,270 650,269.8 650.5,269.6 651,269.3 651.5,269.1 652,268.9 652.5,268.7 653,268.5 653.5,268.2 654,268 654.5,267.8 655,267.6 655.5,267.4 656,267.2 656.5,266.9 657,266.7 657.5,266.5 658,266.3 658.5,266.1 659,265.9 659.5,265.7 660,265.5 660.5,265.2 661,265 661.5,264.8 662,264.6 662.5,264.4 663,264.2 663.5,264 664,263.8 664.5,263.6 665,263.4 665.5,263.2 666,263 666.5,262.8 667,262.6 667.5,262.4 668,262.2 668.5,262 669,261.8 669.5,261.6 670,261.4 670.5,261.2 671,261 671.5,260.8 672,260.6 672.5,260.4 673,260.2 673.5,260 674,259.8 674.5,259.6 675,259.4 675.5,259.3 676,259.1 676.5,258.9 677,258.7 677.5,258.5 678,258.3 678.5,258.1 679,258 679.5,257.8 680,257.6 680.5,257.4 681,257.2 681.5,257 682,256.9 682.5,256.7 683,256.5 683.5,256.3 684,256.2 684.5,256 685,255.8 685.5,255.6 686,255.5 686.5,255.3 687,255.1 687.5,255 688,254.8 688.5,254.6 689,254.5 689.5,254.3 690,254.1 690.5,254 691,253.8 691.5,253.6 692,253.5 692.5,253.3 693,253.1 693.5,253 694,252.8 694.5,252.7 695,252.5 695.5,252.4 696,252.2 696.5,252.1 697,251.9 697.5,251.7 698,251.6 698.5,251.4 699,251.3 699.5,251.1 700,251 700.5,250.9 701,250.7 701.5,250.6 702,250.4 702.5,250.3 703,250.1 703.5,250 704,249.9 704.5,249.7 705,249.6 705.5,249.4 706,249.3" fill="none" stroke="#22c0c0" stroke-width="2"/><rect x="52" y="233" width="654" height="124" fill="none" stroke="#8c8c8c" stroke-width="1.6"/><text x="50" y="244.9" text-anchor="end" class="al">120000</text><text x="50" y="263.1" text-anchor="end" class="al">80000</text><text x="50" y="281.3" text-anchor="end" class="al">40000</text><text x="50" y="299.5" text-anchor="end" class="al">0</text><text x="50" y="317.7" text-anchor="end" class="al">-40000</text><text x="50" y="335.9" text-anchor="end" class="al">-80000</text><text x="50" y="354.1" text-anchor="end" class="al">-120000</text><text x="52.2" y="370.5" text-anchor="middle" class="al">0</text><text x="102" y="370.5" text-anchor="middle" class="al">10000</text><text x="151.8" y="370.5" text-anchor="middle" class="al">20000</text><text x="201.6" y="370.5" text-anchor="middle" class="al">30000</text><text x="251.4" y="370.5" text-anchor="middle" class="al">40000</text><text x="301.2" y="370.5" text-anchor="middle" class="al">50000</text><text x="351" y="370.5" text-anchor="middle" class="al">60000</text><text x="400.8" y="370.5" text-anchor="middle" class="al">70000</text><text x="450.6" y="370.5" text-anchor="middle" class="al">80000</text><text x="500.4" y="370.5" text-anchor="middle" class="al">90000</text><text x="550.2" y="370.5" text-anchor="middle" class="al">100000</text><text x="600" y="370.5" text-anchor="middle" class="al">110000</text><text x="649.8" y="370.5" text-anchor="middle" class="al">120000</text><text x="699.6" y="370.5" text-anchor="middle" class="al">130000</text><text x="54.5" y="229" class="ttl">Ch 1 P-Wave</text><rect x="709" y="233" width="12" height="7" fill="#e8f020"/><line x1="46.5" y1="402" x2="706" y2="402" stroke="#106a60" stroke-width="1.7"/><line x1="46.5" y1="425.6" x2="706" y2="425.6" stroke="#106a60" stroke-width="1.7"/><line x1="46.5" y1="449.3" x2="706" y2="449.3" stroke="#106a60" stroke-width="1.7"/><line x1="46.5" y1="472.9" x2="706" y2="472.9" stroke="#106a60" stroke-width="1.7"/><line x1="46.5" y1="496.6" x2="706" y2="496.6" stroke="#106a60" stroke-width="1.7"/><line x1="46.5" y1="520.2" x2="706" y2="520.2" stroke="#106a60" stroke-width="1.7"/><line x1="46.5" y1="543.9" x2="706" y2="543.9" stroke="#106a60" stroke-width="1.7"/><line x1="46.5" y1="567.5" x2="706" y2="567.5" stroke="#106a60" stroke-width="1.7"/><line x1="46.5" y1="591.2" x2="706" y2="591.2" stroke="#106a60" stroke-width="1.7"/><line x1="46.5" y1="614.9" x2="706" y2="614.9" stroke="#106a60" stroke-width="1.7"/><line x1="46.5" y1="638.5" x2="706" y2="638.5" stroke="#106a60" stroke-width="1.7"/><line x1="84" y1="393" x2="84" y2="652" stroke="#106a60" stroke-width="1.7"/><line x1="119.5" y1="393" x2="119.5" y2="652" stroke="#106a60" stroke-width="1.7"/><line x1="155.1" y1="393" x2="155.1" y2="652" stroke="#106a60" stroke-width="1.7"/><line x1="190.6" y1="393" x2="190.6" y2="652" stroke="#106a60" stroke-width="1.7"/><line x1="226.1" y1="393" x2="226.1" y2="652" stroke="#106a60" stroke-width="1.7"/><line x1="261.6" y1="393" x2="261.6" y2="652" stroke="#106a60" stroke-width="1.7"/><line x1="297.1" y1="393" x2="297.1" y2="652" stroke="#106a60" stroke-width="1.7"/><line x1="332.7" y1="393" x2="332.7" y2="652" stroke="#106a60" stroke-width="1.7"/><line x1="368.2" y1="393" x2="368.2" y2="652" stroke="#106a60" stroke-width="1.7"/><line x1="403.7" y1="393" x2="403.7" y2="652" stroke="#106a60" stroke-width="1.7"/><line x1="439.2" y1="393" x2="439.2" y2="652" stroke="#106a60" stroke-width="1.7"/><line x1="474.7" y1="393" x2="474.7" y2="652" stroke="#106a60" stroke-width="1.7"/><line x1="510.3" y1="393" x2="510.3" y2="652" stroke="#106a60" stroke-width="1.7"/><line x1="545.8" y1="393" x2="545.8" y2="652" stroke="#106a60" stroke-width="1.7"/><line x1="581.3" y1="393" x2="581.3" y2="652" stroke="#106a60" stroke-width="1.7"/><line x1="616.8" y1="393" x2="616.8" y2="652" stroke="#106a60" stroke-width="1.7"/><line x1="652.3" y1="393" x2="652.3" y2="652" stroke="#106a60" stroke-width="1.7"/><line x1="687.9" y1="393" x2="687.9" y2="652" stroke="#106a60" stroke-width="1.7"/><path d="M51.5 552V572M52.5 548.9V572.6M53.5 552.2V575.7M54.5 549.8V572.7M55.5 552.4V574.3M56.5 554.4V575.7M57.5 545.3V575.5M58.5 553V579.7M59.5 552.7V579.8M60.5 552.7V571.4M61.5 550.8V574.4M62.5 555.8V584.5M63.5 549.8V571.4M64.5 551.7V575.3M65.5 556.1V576.4M66.5 551.6V573.2M67.5 553.7V575.2M68.5 553V571.7M69.5 550.8V573.3M70.5 548.8V571.7M71.5 551.7V575.2M72.5 550.8V574.1M73.5 547.2V573.8M74.5 545.2V583.4M75.5 554.9V572.1M76.5 552V576.3M77.5 552.3V572.2M78.5 553.1V574.9M79.5 540.4V586.1M80.5 544.3V572.2M81.5 542V573M82.5 543.2V576.9M83.5 540.9V574.1M84.5 549.9V573.9M85.5 542.7V572.7M86.5 541.3V584.9M87.5 541.7V571.1M88.5 542.9V574M89.5 542.7V571.3M90.5 541.6V578M91.5 543.3V585.2M92.5 544.6V574M93.5 542.5V576.4" stroke="#e6e600" stroke-width="1.3" fill="none"/><path d="M94.5 554V567.5M95.5 553.6V567.1M96.5 549.1V567.6M97.5 550.5V569.1M98.5 551.4V578.7M99.5 550.3V570.2M100.5 552.3V573.5M101.5 553.1V569.8M102.5 550.9V572.7M103.5 553.3V587.7M104.5 556V580.6M105.5 554.1V571.7M106.5 553.1V573.3M107.5 556V582.3M108.5 552.4V572.5M109.5 555.2V570.9M110.5 551.9V584.3M111.5 555.9V572.6M112.5 555.7V571.9M113.5 552.7V571.2M114.5 554.7V582.4M115.5 555.8V573.4M116.5 554.7V575.5M117.5 554.3V578.4M118.5 558V572.5M119.5 555.2V575.9M120.5 554.1V576.6M121.5 557.7V573.2M122.5 554.9V573.1M123.5 557.2V574.4M124.5 560.5V575.6M125.5 558V573.7M126.5 558.8V587.5M127.5 558V576.7M128.5 557.2V574.2M129.5 557.7V576.3M130.5 555.5V574.7M131.5 558.4V575.3M132.5 558.1V575M133.5 561.2V577.4M134.5 559.9V574.9M135.5 557.6V591.6M136.5 558.1V575.2M137.5 558.6V575.3M138.5 563.1V588.8M139.5 556.6V577.1M140.5 558.8V577M141.5 558.1V575.3M142.5 560V578.6M143.5 559V589.1M144.5 557.1V576.1M145.5 556.7V576.1M146.5 562.3V579.4M147.5 561.3V579.9M148.5 559.7V597M149.5 559.2V581M150.5 558.1V577.1M151.5 559.8V588.2M152.5 558.2V579M153.5 559.6V579M154.5 559.4V577.2M155.5 560.8V576.7M156.5 561.3V579.4M157.5 562.6V590.7M158.5 558.3V579.1M159.5 559.8V578.7M160.5 559.6V582.5M161.5 562.1V577.6M162.5 559.6V589M163.5 559.8V578.3M164.5 562.9V580.5M165.5 558.9V581.6M166.5 560.2V578.7M167.5 561.9V577.8M168.5 565.9V579.9M169.5 560.7V587.1M170.5 561.9V580.6M171.5 562.8V581.9M172.5 561.2V584.1M173.5 562.1V579.1M174.5 561.4V590.8M175.5 562.3V579.7M176.5 563.1V579.3M177.5 564V578.8M178.5 565.1V586.8M179.5 557.8V582.8M180.5 565.4V579.2M181.5 560.3V580.5M182.5 563.2V587.5M183.5 565.2V579.5M184.5 559.8V578.8M185.5 562.4V581.3M186.5 565V592.8M187.5 563V580.8M188.5 563.9V581.2M189.5 565.2V579.3M190.5 566.1V583.3M191.5 563.1V582.1M192.5 564.2V583.6M193.5 564.5V582.1M194.5 561.8V579.7M195.5 564.2V585.5M196.5 565.5V580.5M197.5 565.7V583.8M198.5 564V581.7M199.5 565.1V585.5M200.5 564.8V580.4M201.5 563.8V580.4M202.5 560.7V580.5M203.5 563.7V585.6M204.5 566.4V581.5M205.5 567.4V581.6M206.5 565.3V580.9M207.5 560.7V591.2M208.5 559.5V580.4M209.5 564.2V582.3M210.5 564.4V580.7M211.5 564V579.9M212.5 560.9V585.3M213.5 565.7V584.1M214.5 563.7V581.1M215.5 563.6V589M216.5 562.2V582.6M217.5 567.5V580.2M218.5 560.5V594.8M219.5 561.3V580.8M220.5 562.7V581.1M221.5 565.3V584.8M222.5 563V583.7M223.5 560.6V580.4M224.5 565.9V583.8M225.5 565.4V580.6M226.5 561.9V586.4M227.5 564.5V589.1M228.5 564.6V587.9M229.5 563V583.7M230.5 562.8V581.7M231.5 563.9V580.8M232.5 566.4V590.5M233.5 562.5V598M234.5 566.7V580.8M235.5 563.9V581.3M236.5 560.1V587.1M237.5 562.7V586.7M238.5 565.2V583.2M239.5 566.4V598.5M240.5 562.7V583.1M241.5 566.3V581M242.5 569.6V581.1M243.5 565.2V584.5M244.5 567.8V582.5M245.5 565.1V582.1M246.5 566.5V580.8M247.5 563.7V581.5M248.5 562.3V582.5M249.5 564.9V581.7M250.5 564.3V582.8M251.5 563V580.8M252.5 564.3V581.3M253.5 566.4V583.2M254.5 568.9V586.6M255.5 566.8V580.9M256.5 565.1V587.5M257.5 567.1V597.1M258.5 562.1V582.2M259.5 567.4V581M260.5 563.1V591.3M261.5 566.2V581.9M262.5 569.3V586.1M263.5 564.5V581M264.5 561.7V595.2M265.5 564.9V594.4M266.5 563.4V584M267.5 566V581M268.5 565.8V583.8M269.5 567V586.1M270.5 567.2V583.3M271.5 565.6V584.3M272.5 564.6V583.4M273.5 567.2V584.3M274.5 561V591.1M275.5 563.1V584.4M276.5 565.2V598.2M277.5 565V581.8M278.5 561.2V592.7M279.5 564.2V592.4M280.5 562.6V588.5M281.5 565.9V594.1M282.5 564.7V584.6M283.5 565.2V582.1M284.5 565.6V582M285.5 568.2V592.2M286.5 564.1V583.4M287.5 561.5V584.2M288.5 564V594.5M289.5 570.5V593.6M290.5 563.5V596.9M291.5 563.9V581.6M292.5 564.6V586M293.5 565.7V582.2M294.5 564.4V586.6M295.5 561.2V581.8M296.5 563.7V586.8M297.5 564.5V583.1M298.5 567.5V584.5M299.5 565.3V585.2M300.5 564.9V582.9M301.5 565.6V597.1M302.5 566.5V591.6M303.5 565.6V583.8M304.5 568.3V585.7M305.5 565V582.2M306.5 568V596.1M307.5 565.4V582.3M308.5 563.8V583.2M309.5 567.8V588.6M310.5 563.7V584.8M311.5 569.8V584.9M312.5 564.3V582.7M313.5 567.3V582.2M314.5 564.3V581.4M315.5 567.5V582.2M316.5 566.8V585.4M317.5 568.8V585.7M318.5 568.9V584.9M319.5 567.8V581.9M320.5 564.7V586.1M321.5 563.9V583.8M322.5 562.6V597.1M323.5 564.3V585.9M324.5 562.9V599.7M325.5 567.5V583.4M326.5 563.8V585M327.5 567.6V582.4M328.5 565.9V585.2M329.5 562.1V586.2M330.5 569.8V583.3M331.5 565.1V582.3M332.5 566.5V594M333.5 564.5V583M334.5 566.6V587.7M335.5 569V589.2M336.5 568.3V581.8M337.5 564.4V589.8M338.5 564V586.1M339.5 563.4V599.8M340.5 565.5V587.1M341.5 568.3V582.3M342.5 565.3V581.7M343.5 566.3V590.7M344.5 566.8V593.4M345.5 566.4V589M346.5 560.6V581.7M347.5 564.2V583.6M348.5 565.2V592.7M349.5 571.2V584.5M350.5 566.1V583.4M351.5 568.3V588.4M352.5 562V585.3M353.5 565.7V590.1M354.5 567.2V584.1M355.5 567.9V590.1M356.5 564.1V582.6M357.5 565.1V585M358.5 569.5V585.8M359.5 571.3V584.9M360.5 567.4V589.3M361.5 564.6V581.8M362.5 569.9V596.6M363.5 566.7V583.7M364.5 567.9V581.7M365.5 566.2V590.5M366.5 569.1V584.1M367.5 565.7V581.4M368.5 569.1V596.5M369.5 566.6V581.6M370.5 565.9V588.7M371.5 569.7V582.9M372.5 565.6V581.5M373.5 567.5V582.6M374.5 566V583.5M375.5 566.7V581.6M376.5 563.2V586.5M377.5 566.1V590.8M378.5 564.5V584.7M379.5 566.4V588.2M380.5 563.7V584M381.5 566.2V583.7M382.5 566.6V599.4M383.5 564.2V597.9M384.5 564.3V598.9M385.5 565.6V582M386.5 568.8V595.4M387.5 565.4V592.8M388.5 565.5V585.2M389.5 566.2V583.2M390.5 568.3V586M391.5 567.5V586.6M392.5 565.3V581.7M393.5 563.1V582.7M394.5 563.9V583.2M395.5 564.4V582.8M396.5 565V582.5M397.5 568V598.1M398.5 566.3V584.2M399.5 563.3V608.7M400.5 562.4V583.5M401.5 562.3V582.2M402.5 564.7V583.9M403.5 563.9V586.6M404.5 568.3V583.9M405.5 565.6V585.7M406.5 568.9V597.2M407.5 566.7V582.9M408.5 566.2V595.7M409.5 568.3V586.1M410.5 566.9V583.1M411.5 563.8V584.5M412.5 563.2V584.9M413.5 561.4V585M414.5 565.8V587M415.5 566.4V582.8M416.5 568.2V582.5M417.5 566.2V582.2M418.5 564.3V585M419.5 564.8V594.4M420.5 561.9V595.1M421.5 567.1V583.4M422.5 566.7V581.7M423.5 569.1V584.7M424.5 568.2V585.1M425.5 567V582.2M426.5 564.9V581.8M427.5 565.5V582.4M428.5 565.3V582.1M429.5 566.7V586.9M430.5 566.6V581.5M431.5 567.2V582.8M432.5 566.5V585.7M433.5 565.5V581.7M434.5 566.2V582.3M435.5 565V583.2M436.5 570V582.8M437.5 566.6V582.4M438.5 565.9V593.6M439.5 565.3V584.2M440.5 565.3V581.9M441.5 564.6V583.7M442.5 562.1V582.7M443.5 565.7V583.6M444.5 566.7V586.1M445.5 565.7V590.7M446.5 568.8V585M447.5 562.8V592.1M448.5 565.8V583.9M449.5 564.3V583.4M450.5 567.4V587M451.5 565.8V582.2M452.5 566.2V583.5M453.5 564.2V595M454.5 564.9V593.5M455.5 565.8V588.2M456.5 568.2V586.7M457.5 569.4V597.1M458.5 566.8V595.6M459.5 566.7V599.5M460.5 570.2V583.7M461.5 564.5V583.1M462.5 567.7V583.1M463.5 565.9V596.9M464.5 567V593.2M465.5 563.6V586.7M466.5 564.7V585.6M467.5 569.1V582.6M468.5 569.4V582.4M469.5 570V583.1M470.5 567.6V583.7M471.5 565.7V582.5M472.5 569.2V584.6M473.5 566.1V584.2M474.5 568.3V581.8M475.5 566.9V582.3M476.5 564.4V582.2M477.5 566.3V585M478.5 566.1V590.5M479.5 565.5V583.4M480.5 569.1V582.3M481.5 564.1V582.9M482.5 563.4V583.3M483.5 569V584.1M484.5 562.2V591.6M485.5 565.2V583M486.5 566.5V592.9M487.5 566V585.7M488.5 566.3V583.4M489.5 563.2V591M490.5 566.2V583.5M491.5 567.7V584.9M492.5 566.9V584.5M493.5 563.8V582.2M494.5 562.2V594.4M495.5 566.3V591.6M496.5 568V596.7M497.5 568.8V596.3M498.5 563.6V583.7M499.5 563.9V597.1M500.5 565.1V584.2M501.5 566.1V583.7M502.5 568.4V583.8M503.5 564V584.3M504.5 567.3V583M505.5 563.8V591M506.5 565.5V581.5M507.5 565.6V582.7M508.5 568.6V582.7M509.5 565.1V595.3M510.5 568V584M511.5 565.6V590M512.5 566.1V592.5M513.5 566.5V582.3M514.5 565.7V594.6M515.5 567.9V589.4M516.5 566.5V592M517.5 568.9V583.1M518.5 566.8V582M519.5 564.3V585M520.5 563.1V585M521.5 564.8V591.8M522.5 567.9V583.3M523.5 568.9V582.9M524.5 566.1V583.8M525.5 565.5V594.1M526.5 566.5V581.8M527.5 565.5V595.2M528.5 567.4V586.5M529.5 564.4V583.7M530.5 565.1V583.7M531.5 566.1V584.8M532.5 565.5V596.5M533.5 565.4V582.6M534.5 564.6V582.3M535.5 566.3V581.7M536.5 567.5V583.6M537.5 568V584.7M538.5 566.4V582.1M539.5 564.7V581.7M540.5 567.4V581.8M541.5 563.6V582.8M542.5 564.6V584M543.5 563.1V583.2M544.5 564.6V583.8M545.5 564.8V581.7M546.5 567.4V584.9M547.5 566.1V584.5M548.5 567.7V585.3M549.5 568.7V598.6M550.5 567V583.1M551.5 563.9V581.7M552.5 561.7V586.5M553.5 564.9V582.8M554.5 567V583.6M555.5 570.1V583.3M556.5 563.3V583.1M557.5 565V594.4M558.5 568.1V581.5M559.5 564.5V581.9M560.5 567.4V585M561.5 566.2V582.8M562.5 569.1V582.3M563.5 566.8V582.4M564.5 563.6V589.9M565.5 567.6V596.2M566.5 564.5V584.7M567.5 566.7V595.6M568.5 563.8V586M569.5 567.3V582.5M570.5 564.7V584.5M571.5 564.8V581.8M572.5 566.2V584.8M573.5 565.2V585.8M574.5 566.6V594.8M575.5 570.2V584.1M576.5 563V582.5M577.5 569.6V585.2M578.5 568.9V583M579.5 564.6V583.5M580.5 568.1V583.7M581.5 570.4V581.9M582.5 567.2V583M583.5 567.1V583.9M584.5 567.6V584.2M585.5 564.9V595.9M586.5 563.3V581.7M587.5 565.3V585.8M588.5 565.6V582.6M589.5 567.5V583M590.5 566.6V584M591.5 569.8V587.5M592.5 563.6V582M593.5 568.4V581.9M594.5 562.4V590.2M595.5 563.3V582.5M596.5 569.1V583.3M597.5 566.1V586.2M598.5 565.6V583.2M599.5 564V583.1M600.5 565.4V584.8M601.5 564.7V582.2M602.5 569.8V585M603.5 564.4V591.5M604.5 566.1V585.3M605.5 567.6V584.8M606.5 567V585.2M607.5 562.8V584.9M608.5 567.7V584.5M609.5 568.1V583.7M610.5 563.7V585.8M611.5 567.2V583.6M612.5 565.9V600.8M613.5 565.1V583.7M614.5 565.1V585.5M615.5 565.6V592.3M616.5 562V583.7M617.5 567.5V582.6M618.5 566.7V588.3M619.5 569.4V581.5M620.5 565.8V584.7M621.5 568.4V591.9M622.5 566.5V600.2M623.5 567.4V588M624.5 566.8V597.6M625.5 569.1V583.6M626.5 571.2V585.8M627.5 565.6V584.2M628.5 565.5V598.7M629.5 568.3V586M630.5 564.7V583.6M631.5 568V584.1M632.5 563.7V584.3M633.5 564.4V581.6M634.5 564.3V585.6M635.5 568.4V582.3M636.5 567.7V583.2M637.5 565.9V586.5M638.5 566.6V595.1M639.5 566.3V584.4M640.5 568.1V584.4M641.5 563.7V590.8M642.5 562.3V594.8M643.5 566.6V587.8M644.5 563.5V581.9M645.5 565V584.7M646.5 567.2V596.3M647.5 564.8V583.6M648.5 567.9V596.7M649.5 563.2V581.8M650.5 568.8V584.2M651.5 566V587M652.5 565.6V605.8M653.5 564.7V581.9M654.5 565.7V584.8M655.5 566V582M656.5 570.1V581.7M657.5 563.3V582.6M658.5 566.2V583.4M659.5 566.3V585.6M660.5 564.7V589.1M661.5 566.8V581.5M662.5 572.4V583M663.5 565.7V582.9M664.5 563.2V582.3M665.5 566.3V583.5M666.5 567.9V583.3M667.5 566V585.7M668.5 566.2V581.6M669.5 564.6V595.6M670.5 565.4V583.7M671.5 566.1V584.8M672.5 571V581.9M673.5 563.2V581.8M674.5 568V582.5M675.5 565.5V584.3M676.5 565.4V584.5M677.5 569.2V584.1M678.5 563.5V591.6M679.5 569.9V582.1M680.5 564.1V592.9M681.5 565.8V584.4M682.5 567.5V582.2M683.5 567.8V583M684.5 565.5V585.8M685.5 566.6V589M686.5 567.2V592.3M687.5 566.7V584.2M688.5 569.5V590.4M689.5 566.2V587.6M690.5 567.3V584.4M691.5 563.5V581.5M692.5 566.4V583.5M693.5 562.5V583.4M694.5 564.1V592.8M695.5 568.4V598.6M696.5 564.5V585.9M697.5 565.8V585.8M698.5 568.5V582.5M699.5 567.2V586.2M700.5 564.7V581.7M701.5 563.2V583.3M702.5 568.7V584.6M703.5 568.9V594.4M704.5 563.8V581.8M705.5 569.1V584.3" stroke="#18e8e8" stroke-width="1.3" fill="none"/><path d="M94.5 552.7V564.9M95.5 555.1V561.7M96.5 553.6V564.7M97.5 553.8V564.6M98.5 553.8V566.7M99.5 554V565.2M100.5 554.7V565.8M101.5 554.7V567.4M102.5 555.1V566.4M103.5 555.3V564.9M104.5 554.8V565M105.5 556V565.8M106.5 555V567.4M107.5 556.8V564.6M108.5 558.2V567.5M109.5 556.6V569.3M110.5 557V567M111.5 559.3V566.5M112.5 557.2V569.6M113.5 556.4V568.3M114.5 558.1V572.3M115.5 557V568.8M116.5 558.7V569.2M117.5 557V569.8M118.5 558.5V570.1M119.5 559.7V571.1M120.5 559.1V570.2M121.5 557.8V569.7M122.5 559.3V569.5M123.5 559.3V569M124.5 560.9V573.6M125.5 559.2V571.1M126.5 559.5V572.6M127.5 560.3V571M128.5 559.8V571.2M129.5 559.1V572.1M130.5 559.6V572.1M131.5 560.5V573.1M132.5 560.5V573.1M133.5 559.8V572.6M134.5 560.6V572.1M135.5 561V573.4M136.5 559.1V572.6M137.5 559.7V574M138.5 559.3V570.8M139.5 559.8V574.9M140.5 560.3V572.7M141.5 561.1V570M142.5 561.5V573.8M143.5 561.7V574.3M144.5 561.6V573M145.5 561.7V573.6M146.5 564.1V573.8M147.5 562.5V572.4M148.5 561.7V575.6M149.5 561.4V572.2M150.5 562.5V573M151.5 564.7V570.2M152.5 563.2V574.9M153.5 561.8V572.9M154.5 563.4V576.5M155.5 562.2V571.7M156.5 564.2V576.5M157.5 562.9V571M158.5 564.8V574.1M159.5 564.6V574.4M160.5 563.1V573.8M161.5 565.1V576.8M162.5 561.5V573.3M163.5 565.5V574.2M164.5 562.5V574.8M165.5 563.8V574.8M166.5 563.5V574.5M167.5 563.6V575.6M168.5 563.3V574.7M169.5 564.1V577.2M170.5 564.6V575.1M171.5 564.9V575.9M172.5 565.5V576.2M173.5 566.3V577.5M174.5 564.5V574.9M175.5 565.5V576.4M176.5 564.6V573.4M177.5 562.9V576.2M178.5 565.5V577M179.5 563.5V577.4M180.5 564.4V576.5M181.5 565.4V574.7M182.5 564.4V572.9M183.5 564.1V573.3M184.5 565.5V576.2M185.5 566.1V576.7M186.5 564.6V576.7M187.5 564.9V577.2M188.5 565.6V574.8M189.5 565.4V576.4M190.5 565.1V577.7M191.5 567.2V575.9M192.5 565.1V573.1M193.5 565.4V575.9M194.5 563.4V577M195.5 566.2V575.5M196.5 565.3V575.2M197.5 566.5V574.4M198.5 565.4V579.7M199.5 565.8V577.5M200.5 565.7V575.1M201.5 565.8V577.5M202.5 564.9V577.4M203.5 567.2V578.6M204.5 564.4V575.5M205.5 564.4V578.6M206.5 566.7V578.1M207.5 565.2V575.3M208.5 566.2V577.3M209.5 565.3V577.4M210.5 566.8V577.5M211.5 565.2V574.1M212.5 566V577.5M213.5 566V576.6M214.5 565.6V578.4M215.5 566.3V577.5M216.5 565.4V576.5M217.5 566.6V575.9M218.5 565.2V576.9M219.5 567.7V577.8M220.5 568V577.3M221.5 566.2V575.4M222.5 566V579.7M223.5 566.9V578.7M224.5 567.3V577.6M225.5 566.4V577.8M226.5 567.3V578.3M227.5 567.2V577.9M228.5 565.9V577.3M229.5 565.8V579.2M230.5 564.6V577.4M231.5 569.2V577.3M232.5 565.7V577.8M233.5 568.1V577.6M234.5 567.4V578M235.5 566.5V582.6M236.5 566.9V577.1M237.5 566.4V578.5M238.5 567.3V579.1M239.5 567.1V575.8M240.5 567.5V577.5M241.5 566.7V575.7M242.5 566.4V576.9M243.5 567V575.8M244.5 567.1V578.2M245.5 565.9V577.1M246.5 566.2V579.4M247.5 564.6V577.6M248.5 565.4V577.4M249.5 568V577.2M250.5 567.3V576.9M251.5 569.1V579.5M252.5 568.3V576.2M253.5 566.1V579.8M254.5 567V577.8M255.5 567.5V576.3M256.5 568V578.2M257.5 567.7V577.2M258.5 567.8V577.2M259.5 568.2V580M260.5 568.2V579M261.5 567.9V574.2M262.5 568.1V577.9M263.5 567.4V577.9M264.5 565.9V577.5M265.5 568V580.5M266.5 566.7V577M267.5 568.8V577M268.5 569.4V578.4M269.5 566.5V579.9M270.5 569.1V576.2M271.5 569V578M272.5 568.9V577.8M273.5 565.8V579.2M274.5 568.4V581.6M275.5 569.2V579.5M276.5 567.2V577.7M277.5 567.2V577.2M278.5 567.2V574.7M279.5 567.7V578.4M280.5 570.1V579.6M281.5 567V579.4M282.5 566.3V577.6M283.5 565.7V580.7M284.5 568.1V576.8M285.5 567.5V580M286.5 568V579.1M287.5 566.7V577.6M288.5 567.7V579.9M289.5 566.7V576.9M290.5 568.7V577.2M291.5 568.7V579M292.5 568.5V581.2M293.5 568.3V579.8M294.5 566.7V577.6M295.5 568.3V580.9M296.5 569V582.1M297.5 567.9V578.9M298.5 568.6V578.7M299.5 567.6V577.1M300.5 568.6V577M301.5 568.2V576.5M302.5 568.8V577.1M303.5 568.5V576.3M304.5 567.2V580.4M305.5 566.9V578.8M306.5 567.2V575.2M307.5 568V579.3M308.5 566.6V579.6M309.5 566.9V577.2M310.5 567.7V577.7M311.5 570V576.4M312.5 568.5V580.2M313.5 565.7V576.1M314.5 568.3V578M315.5 568.1V580.4M316.5 567.4V577.1M317.5 565V579M318.5 566.8V579.2M319.5 568V576.7M320.5 569.5V580.4M321.5 568.6V577M322.5 567.4V577.9M323.5 567.4V577.1M324.5 568.2V579.1M325.5 568.1V578M326.5 569.1V579.1M327.5 565V577.8M328.5 567.7V580.2M329.5 567.5V578.4M330.5 567.1V579.8M331.5 567.4V577.9M332.5 567.1V579.6M333.5 567.3V576.3M334.5 568.4V577.8M335.5 568.2V579.4M336.5 569V580.4M337.5 567.2V578.6M338.5 566.5V581.3M339.5 568.3V580.9M340.5 567.5V575.8M341.5 569.4V579M342.5 568V578.9M343.5 568.5V579.6M344.5 566.3V580.5M345.5 567.3V578.1M346.5 569.6V580.2M347.5 567.5V576.1M348.5 568V579.7M349.5 567.8V577M350.5 567.1V577M351.5 568.1V580.1M352.5 568.9V577.8M353.5 568.1V579.7M354.5 567.4V578.6M355.5 570V579.2M356.5 568.8V578.2M357.5 567.9V576.3M358.5 567.9V580.7M359.5 570V580.7M360.5 568.6V579M361.5 567.3V578.6M362.5 568.5V577.7M363.5 568.8V577.4M364.5 566.1V577.4M365.5 566.2V576.8M366.5 569V578.6M367.5 568.1V580.6M368.5 569.2V578.1M369.5 569.2V579.5M370.5 567.9V579.6M371.5 566.5V577.7M372.5 567.8V579.8M373.5 567.5V578.7M374.5 568.9V581M375.5 568.7V580.8M376.5 567.5V578.5M377.5 568.2V578.5M378.5 567.4V581.4M379.5 567.7V577.5M380.5 568.4V581.7M381.5 568V580.8M382.5 567.5V578.2M383.5 567.2V578.7M384.5 569.8V577.2M385.5 569.6V577.4M386.5 567.7V580.2M387.5 568.6V579.4M388.5 566.3V579.5M389.5 566.9V582.8M390.5 567.7V579.2M391.5 566.8V578.2M392.5 566.6V580.4M393.5 567.7V579.8M394.5 567.3V578.2M395.5 569.2V577.5M396.5 566.1V579.5M397.5 566.8V578.3M398.5 568.9V577.7M399.5 568.8V577.9M400.5 569.4V580.9M401.5 567.5V578.6M402.5 567.1V579.2M403.5 569.1V576.8M404.5 568.9V577M405.5 567.1V576.3M406.5 570.1V579M407.5 568.2V577.9M408.5 569V575.8M409.5 568V582.3M410.5 567.6V579M411.5 568.6V577.7M412.5 568V580.4M413.5 568.1V579.5M414.5 567.6V579.4M415.5 568V581.1M416.5 568.7V578.6M417.5 565.5V580M418.5 568.7V577.6M419.5 566V577.2M420.5 568.9V577.4M421.5 567.5V579.3M422.5 569.2V578.9M423.5 567.9V578.1M424.5 569.6V580.6M425.5 567.9V576.9M426.5 567.2V579.8M427.5 567.2V580.3M428.5 568.3V579.4M429.5 568.6V579.7M430.5 567.1V578.5M431.5 570.3V577.2M432.5 567.5V580.6M433.5 567.8V577.8M434.5 566.6V579.8M435.5 569V581.1M436.5 568V580.5M437.5 566.9V579.2M438.5 567.3V579.2M439.5 568.7V580.6M440.5 567V580.9M441.5 567.5V577.4M442.5 567.8V576.8M443.5 568V579.4M444.5 567.8V579.8M445.5 567.7V579M446.5 566.5V579M447.5 567.1V578.3M448.5 567.9V579.3M449.5 566.3V576.6M450.5 567.7V579.7M451.5 568.3V580.3M452.5 569.3V579.7M453.5 568V577.4M454.5 567V578.3M455.5 568.2V579.3M456.5 568V578.8M457.5 568.6V579.3M458.5 568.3V579.4M459.5 567.4V577.4M460.5 568.5V579.6M461.5 567.8V578.4M462.5 570.3V577.8M463.5 567.8V579.4M464.5 566.8V579.2M465.5 569.8V580.4M466.5 568.6V579.9M467.5 568.1V580.4M468.5 567.8V578.3M469.5 568.1V580.3M470.5 568.3V580M471.5 566V580.8M472.5 570.3V581M473.5 567.7V577.7M474.5 568.3V577.5M475.5 568.7V578.2M476.5 568.9V581M477.5 566V579.4M478.5 567.3V576.9M479.5 567.4V578.7M480.5 569V576.7M481.5 569V582M482.5 568.6V579.8M483.5 568V577.2M484.5 568.5V579.6M485.5 568.7V582.8M486.5 568.7V579.6M487.5 569.6V577M488.5 566.8V578.4M489.5 567.3V580M490.5 567.7V581.6M491.5 569.5V580.1M492.5 567.6V579.9M493.5 568.8V577.4M494.5 568.3V580M495.5 568.2V581.3M496.5 569.2V577.8M497.5 568.1V577.7M498.5 568.6V577.7M499.5 568.9V579.6M500.5 569V578.8M501.5 566.5V581.6M502.5 567.8V581.1M503.5 568.4V580M504.5 569.8V579.5M505.5 569.4V576.8M506.5 568.9V578.6M507.5 567.9V579M508.5 568.3V581.5M509.5 566.1V579.1M510.5 567.3V580.7M511.5 567.6V579.7M512.5 567.6V580M513.5 569V578.4M514.5 568V576.9M515.5 568.3V580.3M516.5 567.4V580.7M517.5 565.9V576.2M518.5 566.6V578.3M519.5 568V578.9M520.5 567.9V580.1M521.5 567.5V577.1M522.5 566.8V582.2M523.5 565.6V578.7M524.5 569.5V579.7M525.5 567.2V579M526.5 568.9V580.8M527.5 567.1V580.1M528.5 568.2V580.7M529.5 569.4V578.5M530.5 566.5V579.6M531.5 569.8V580M532.5 568.2V582.6M533.5 567V580.3M534.5 567.4V579.1M535.5 568.1V581.3M536.5 567.1V578.2M537.5 566.4V579.7M538.5 567.5V579.6M539.5 566.9V578.5M540.5 569V578.7M541.5 568.6V579.8M542.5 567.6V576.7M543.5 569V579.3M544.5 569V576M545.5 566.3V575.8M546.5 567.1V580.6M547.5 568.6V578.9M548.5 568.1V580.1M549.5 567.7V579.6M550.5 568.1V575.7M551.5 567.6V581M552.5 567.6V578.8M553.5 567.4V578.3M554.5 569.1V578.6M555.5 567V574.3M556.5 567.4V576M557.5 566.2V580.2M558.5 568.7V576.1M559.5 568.8V579.7M560.5 567.2V580.1M561.5 566.4V577.2M562.5 566.6V577.3M563.5 568.9V577M564.5 566.8V577.6M565.5 568.2V578.5M566.5 568.9V577.9M567.5 566.7V578.2M568.5 568V577.6M569.5 568.3V581.7M570.5 567.4V579.1M571.5 569.3V578M572.5 567.1V577.3M573.5 568.4V579.7M574.5 567.8V579M575.5 569.3V580.3M576.5 566.6V579M577.5 568.1V580M578.5 567.8V578M579.5 567.5V576.3M580.5 567.9V578.1M581.5 568.4V577.4M582.5 567.5V577.5M583.5 566.9V580M584.5 567.5V579.6M585.5 566.8V579.1M586.5 566.3V578.2M587.5 567.5V579.8M588.5 568.1V578.7M589.5 568.8V579.2M590.5 568.5V580.1M591.5 567.9V578.5M592.5 568.3V578.3M593.5 568.3V580.6M594.5 568.8V578.4M595.5 566.7V578.8M596.5 567.8V580.6M597.5 567.6V578.6M598.5 568.7V578.2M599.5 567.8V581.5M600.5 569.4V579.9M601.5 568.2V577.5M602.5 568.5V579M603.5 568.2V578.2M604.5 567.9V578.7M605.5 568.3V581.1M606.5 568.3V576.4M607.5 567V576.6M608.5 567.2V579.8M609.5 568.4V578M610.5 568.2V577.8M611.5 566.5V576.8M612.5 567.1V581.1M613.5 566.6V580.8M614.5 569.3V578.7M615.5 567.9V578M616.5 567.9V579.9M617.5 568V580.4M618.5 569.1V579.4M619.5 568.3V578.8M620.5 568.3V577.3M621.5 568.4V579.2M622.5 567.1V582.1M623.5 567V577.6M624.5 568.2V576M625.5 567.2V576.6M626.5 567V578.7M627.5 568.3V580.6M628.5 568.8V580.7M629.5 568.5V578.2M630.5 569.1V578.2M631.5 567.3V581.2M632.5 568.7V579.2M633.5 568.7V580.2M634.5 566.6V578.8M635.5 566.8V579.1M636.5 567.3V581M637.5 568.5V577.7M638.5 567.9V577.1M639.5 568V579.7M640.5 568.2V576M641.5 567.6V579.7M642.5 568.2V580.7M643.5 566.7V579.7M644.5 567.3V579.2M645.5 568.3V579.9M646.5 567.4V579.2M647.5 566.8V576.8M648.5 568.5V578.8M649.5 566.3V577.6M650.5 568V581.2M651.5 569V580.1M652.5 566.2V578.8M653.5 568.4V579.5M654.5 568.4V578.6M655.5 569.7V581.1M656.5 567.8V577.4M657.5 570V578.1M658.5 569.1V581.8M659.5 567V579.3M660.5 567.6V579.7M661.5 568.3V581.8M662.5 568.5V578.9M663.5 569.1V578.5M664.5 567.6V582.3M665.5 567.1V578.2M666.5 568V577.3M667.5 565.8V580.5M668.5 567.2V578.1M669.5 567.6V577.4M670.5 566.9V579.2M671.5 570.3V580M672.5 568.7V576.7M673.5 567.9V577.1M674.5 568.7V578.6M675.5 568V578.8M676.5 567.4V576.6M677.5 568.5V576.8M678.5 566.8V578.5M679.5 567.2V579.3M680.5 569V579.3M681.5 568.1V578.9M682.5 568.8V576.1M683.5 568.3V577.5M684.5 566.7V578.9M685.5 567.6V579.8M686.5 569V575.4M687.5 567.9V581.8M688.5 568.8V581.1M689.5 568V576.8M690.5 566.8V580M691.5 568.9V577.8M692.5 567.7V579.3M693.5 566.2V578.4M694.5 569.6V582.2M695.5 567.8V581.7M696.5 567.4V577.7M697.5 565.7V580.3M698.5 567.6V582.4M699.5 568.3V579.2M700.5 566.1V581.2M701.5 567.6V578.7M702.5 565.7V580.3M703.5 568.9V578M704.5 568V579.5M705.5 568.9V579.1" stroke="#20f4f4" stroke-width="1.2" fill="none"/><circle cx="57" cy="541" r="2" fill="#9a9a20"/><circle cx="62" cy="547" r="2.2" fill="#9a9a20"/><circle cx="66" cy="537" r="2" fill="#9a9a20"/><circle cx="71" cy="544" r="2.4" fill="#9a9a20"/><circle cx="60" cy="553" r="2" fill="#9a9a20"/><circle cx="69" cy="552" r="2.2" fill="#9a9a20"/><circle cx="75" cy="548" r="2" fill="#9a9a20"/><circle cx="74" cy="538" r="1.8" fill="#9a9a20"/><line x1="50" y1="571.5" x2="706" y2="571.5" stroke="#6a70f0" stroke-width="1.3" opacity="0.75"/><line x1="50.5" y1="406" x2="50.5" y2="592" stroke="#e8e800" stroke-width="3"/><text x="52.5" y="407" class="ttl" style="font-size:10px">1</text><rect x="46.5" y="393" width="659.5" height="259" fill="none" stroke="#8c8c8c" stroke-width="2"/><text x="45" y="405.5" text-anchor="end" class="al" style="letter-spacing:0.3px">-0.0</text><text x="45" y="429.1" text-anchor="end" class="al" style="letter-spacing:0.3px">-20.0</text><text x="45" y="452.8" text-anchor="end" class="al" style="letter-spacing:0.3px">-40.0</text><text x="45" y="476.4" text-anchor="end" class="al" style="letter-spacing:0.3px">-60.0</text><text x="45" y="500.1" text-anchor="end" class="al" style="letter-spacing:0.3px">-80.0</text><text x="45" y="523.8" text-anchor="end" class="al" style="letter-spacing:0.3px">-100.0</text><text x="45" y="547.4" text-anchor="end" class="al" style="letter-spacing:0.3px">-120.0</text><text x="45" y="571" text-anchor="end" class="al" style="letter-spacing:0.3px">-140.0</text><text x="45" y="594.7" text-anchor="end" class="al" style="letter-spacing:0.3px">-160.0</text><text x="45" y="618.4" text-anchor="end" class="al" style="letter-spacing:0.3px">-180.0</text><text x="45" y="642" text-anchor="end" class="al" style="letter-spacing:0.3px">-200.0</text><text x="12" y="665" class="al">MHz</text><text x="48.5" y="665" text-anchor="middle" class="al">0.00</text><text x="84" y="665" text-anchor="middle" class="al">0.04</text><text x="119.5" y="665" text-anchor="middle" class="al">0.08</text><text x="155.1" y="665" text-anchor="middle" class="al">0.12</text><text x="190.6" y="665" text-anchor="middle" class="al">0.16</text><text x="226.1" y="665" text-anchor="middle" class="al">0.20</text><text x="261.6" y="665" text-anchor="middle" class="al">0.24</text><text x="297.1" y="665" text-anchor="middle" class="al">0.28</text><text x="332.7" y="665" text-anchor="middle" class="al">0.32</text><text x="368.2" y="665" text-anchor="middle" class="al">0.36</text><text x="403.7" y="665" text-anchor="middle" class="al">0.40</text><text x="439.2" y="665" text-anchor="middle" class="al">0.44</text><text x="474.7" y="665" text-anchor="middle" class="al">0.48</text><text x="510.3" y="665" text-anchor="middle" class="al">0.52</text><text x="545.8" y="665" text-anchor="middle" class="al">0.56</text><text x="581.3" y="665" text-anchor="middle" class="al">0.60</text><text x="616.8" y="665" text-anchor="middle" class="al">0.64</text><text x="652.3" y="665" text-anchor="middle" class="al">0.68</text><text x="687.9" y="665" text-anchor="middle" class="al">0.72</text><text x="49.5" y="388" class="ttl" style="letter-spacing:0.5px">Ch 1 Fourier Transform</text><rect x="709.5" y="393" width="11" height="6.5" fill="#e8f020"/><rect x="10" y="82" width="921" height="3" fill="#e0101a"/><rect x="10" y="82" width="2.5" height="590" fill="#b01018"/><rect x="10" y="669.5" width="921" height="2.5" fill="#c8101a"/><rect x="13" y="216" width="709" height="3" fill="#e8101a"/><rect x="13" y="375.5" width="709" height="3" fill="#d8101a"/><rect x="722" y="82" width="3" height="590" fill="#d8101a"/><rect x="927" y="82" width="3.5" height="590" fill="#d83c40"/><rect x="725" y="375.5" width="202" height="3" fill="#e84040"/></svg>
<div class="abs" style="left:725px;top:378.5px;width:202px;height:291px;background:#f0f0f0"></div>
<div class="hdr" style="left:725px;top:85px;width:202px;height:20.5px;background:#00009a;">Channel 1</div><div class="row" style="left:725px;top:106.5px;width:202px;height:16.75px"><span class="l" style="left:5px">fs</span><span class="r" style="right:5px">14.000000 Msps</span></div><div class="row" style="left:725px;top:123.2px;width:202px;height:16.75px"><span class="l" style="left:5px">F1</span><span class="r" style="right:5px">2.029418945 KHz</span></div><div class="row" style="left:725px;top:140px;width:202px;height:16.75px"><span class="l" style="left:5px">Bin Width</span><span class="r" style="right:5px">106.812 Hz</span></div><div class="row" style="left:725px;top:156.8px;width:202px;height:16.75px"><span class="l" style="left:5px">F1 Bin</span><span class="r" style="right:5px">19</span></div><div class="row" style="left:725px;top:173.5px;width:202px;height:16.75px"><span class="l" style="left:5px">F1 Amplitude</span><span class="r" style="right:5px">-1.294799 dBFS</span></div><div style="position:absolute;left:725px;top:193px;width:202px;height:2px;background:#303030"></div><div class="hdr" style="left:725px;top:194.5px;width:99px;height:22px;background:#008400;color:#c8f0c8">Parameters</div><div class="hdr" style="left:826.5px;top:194.5px;width:100.5px;height:22px;background:#c4002c;color:#f8d0d8">Harmonics</div><div style="position:absolute;left:824px;top:194px;width:2.5px;height:22px;background:#101010"></div><div style="position:absolute;left:824px;top:216px;width:2.5px;height:160px;background:#505050"></div><div class="row2" style="left:725px;top:217.2px;width:99px;height:16.6px;border-bottom:1px solid #c8c8c8;"><span class="l" style="left:5px">SNR</span><span class="r" style="right:3px">93.98 dB</span></div><div class="row2" style="left:827px;top:217.2px;width:100px;height:16.6px;border-bottom:1px solid #c8c8c8;"><span class="l" style="left:4px">F2</span><span class="r" style="right:5px">-120.82 dBc</span></div><div class="row2" style="left:725px;top:233.8px;width:99px;height:16.6px;border-bottom:1px solid #c8c8c8;"><span class="l" style="left:5px">SINAD</span><span class="r" style="right:3px">93.93 dB</span></div><div class="row2" style="left:827px;top:233.8px;width:100px;height:16.6px;border-bottom:1px solid #c8c8c8;"><span class="l" style="left:4px">F3</span><span class="r" style="right:5px">-115.76 dBc</span></div><div class="row2" style="left:725px;top:250.4px;width:99px;height:16.6px;border-bottom:1px solid #c8c8c8;"><span class="l" style="left:5px">THD</span><span class="r" style="right:3px">-113.15 dB</span></div><div class="row2" style="left:827px;top:250.4px;width:100px;height:16.6px;border-bottom:1px solid #c8c8c8;"><span class="l" style="left:4px">F4</span><span class="r" style="right:5px">-123.53 dBc</span></div><div class="row2" style="left:725px;top:267px;width:99px;height:16.6px;border-bottom:1px solid #c8c8c8;"><span class="l" style="left:5px">SFDR</span><span class="r" style="right:3px">113.79 dB</span></div><div class="row2" style="left:827px;top:267px;width:100px;height:16.6px;border-bottom:1px solid #c8c8c8;"><span class="l" style="left:4px">F5</span><span class="r" style="right:5px">-120.41 dBc</span></div><div class="row2" style="left:725px;top:283.6px;width:99px;height:16.6px;border-bottom:1px solid #c8c8c8;"><span class="l" style="left:5px">ENOB</span><span class="r" style="right:3px">15.31 bits</span></div><div class="row2" style="left:827px;top:283.6px;width:100px;height:16.6px;border-bottom:1px solid #c8c8c8;"><span class="l" style="left:4px">F6</span><span class="r" style="right:5px">-125.83 dBc</span></div><div class="row2" style="left:725px;top:300.2px;width:99px;height:16.6px;border-bottom:1px solid #c8c8c8;"><span class="l" style="left:5px">Max</span><span class="r" style="right:3px">122491</span></div><div class="row2" style="left:827px;top:300.2px;width:100px;height:16.6px;border-bottom:1px solid #c8c8c8;"><span class="l" style="left:4px">F7</span><span class="r" style="right:5px">-114.93 dBc</span></div><div class="row2" style="left:725px;top:316.8px;width:99px;height:16.6px;border-bottom:1px solid #c8c8c8;"><span class="l" style="left:5px">Min</span><span class="r" style="right:3px">-103362</span></div><div class="row2" style="left:827px;top:316.8px;width:100px;height:16.6px;border-bottom:1px solid #c8c8c8;"><span class="l" style="left:4px">F8</span><span class="r" style="right:5px">-113.79 dBc</span></div><div class="row2" style="left:725px;top:333.4px;width:99px;height:16.6px;border-bottom:1px solid #c8c8c8;"><span class="l" style="left:5px">DCLev</span><span class="r" style="right:3px">9563.3</span></div><div class="row2" style="left:827px;top:333.4px;width:100px;height:16.6px;border-bottom:1px solid #c8c8c8;"><span class="l" style="left:4px">F9</span><span class="r" style="right:5px">-118.64 dBc</span></div><div class="row2" style="left:725px;top:350px;width:99px;height:16.6px;"><span class="l" style="left:5px">Flor</span><span class="r" style="right:3px">-143.44 dBFS</span></div><div class="row2" style="left:827px;top:350px;width:100px;height:16.6px;"><span class="l" style="left:4px">Nyq</span><span class="r" style="right:5px">-159.87 dBc</span></div>
<div class="abs" style="left:730.5px;top:383px;width:72px;height:41px;background:#10f010;border:1px solid #20a020;box-sizing:border-box;display:flex;align-items:center;justify-content:center;font-weight:bold;font-size:12px;color:#103010">Collect</div><div class="menu" style="left:821.5px;top:385px;font-size:9.5px">Msps</div><div class="abs" style="left:851.5px;top:382px;width:71px;height:17px;background:#fff;border-top:2px solid #888;border-left:2px solid #888;box-sizing:border-box"></div><div class="menu" style="left:855px;top:385px;font-size:10px">14</div><div class="menu" style="left:821.5px;top:409.5px;font-size:9.5px">Size</div><div class="abs" style="left:851.5px;top:406.5px;width:18px;height:17px;background:#f8f8f8;border:2px solid #888;border-right-color:#aaa;border-bottom-color:#aaa;box-sizing:border-box"></div><svg class="abs" style="left:857px;top:413px" width="7" height="5"><path d="M0 0h7L3.5 4.5z" fill="#202020"/></svg><div class="abs" style="left:869px;top:406.5px;width:53px;height:1.5px;background:#aaa"></div><div class="menu" style="left:890px;top:409.5px;font-size:10px">131072</div><div class="abs" style="left:732px;top:434px;width:10px;height:10px;border-top:1.5px solid #808080;border-left:1.5px solid #808080;box-sizing:border-box"></div><svg class="abs" style="left:733px;top:435px" width="9" height="9"><path d="M1 4l2.5 3L8 1" stroke="#202020" stroke-width="1.6" fill="none"/></svg><div class="menu" style="left:750.5px;top:433.5px;font-size:10px">Repeat</div><div class="abs" style="left:732px;top:458px;width:10px;height:10px;border-top:1.5px solid #808080;border-left:1.5px solid #808080;box-sizing:border-box"></div><svg class="abs" style="left:733px;top:459px" width="9" height="9"><path d="M1 4l2.5 3L8 1" stroke="#202020" stroke-width="1.6" fill="none"/></svg><div class="menu" style="left:750.5px;top:457.5px;font-size:10px">ADC Full Scale</div><div class="abs" style="left:821.5px;top:431px;width:100.5px;height:16.5px;background:#f4f4f4;border:1.5px solid #888;border-right-color:#c8c8c8;border-bottom-color:#c8c8c8;box-sizing:border-box"></div><div class="menu" style="left:825px;top:433.5px;font-size:9.5px;letter-spacing:-0.3px">Blkman-Harris 92dB</div><svg class="abs" style="left:912px;top:437px" width="7" height="5"><path d="M0 0h7L3.5 4.5z" fill="#202020"/></svg><div class="abs" style="left:821.5px;top:454.5px;width:100.5px;height:16px;background:#eeeeee;border-top:2px solid #999;border-left:2px solid #999;box-sizing:border-box"></div><div class="abs" style="left:725px;top:500px;width:202px;height:2px;background:#505060"></div><div class="hdr" style="left:725px;top:502px;width:202px;height:20px;background:#7272f2;color:#d8d8ff;font-size:10px">Status Messages</div><div class="abs" style="left:725px;top:522px;width:202px;height:101px;background:#fff"></div><div class="menu" style="left:727px;top:524.0px;font-size:10px;color:#101010;letter-spacing:-0.1px">Created Tones Pipeline</div><div class="menu" style="left:727px;top:535.8px;font-size:10px;color:#101010;letter-spacing:-0.1px">Signal source: None</div><div class="menu" style="left:727px;top:547.6px;font-size:10px;color:#101010;letter-spacing:-0.1px">Signal source: DC718</div><div class="menu" style="left:727px;top:559.4px;font-size:10px;color:#101010;letter-spacing:-0.1px">Detected demobd: DC2290A-A</div><div class="abs" style="left:725px;top:623px;width:202px;height:2px;background:#a0a0a0"></div><div class="abs" style="left:725px;top:625px;width:202px;height:44.5px;background:#fff"></div><svg class="abs" style="left:725px;top:625px" width="202" height="45"><path d="M39.4 1.2C31 8.5 27 15 23.8 21C21 27 19.5 31 17.6 32.3C14 37 10 39.5 7.3 41H51.8V36.5C46 36.2 40.5 34 36.3 30.2C32.5 26 32.6 16 35.2 11.6C36.5 7.5 38.5 4 41.5 2.3z" fill="#b80c18"/><path d="M44.6 1.7H87C82 7 79.5 11 77.7 15.7C75 22 73.5 26 70.5 29.2C67 34 62 38.5 56 40.6C59.5 36 62.5 31 63.2 26C64.5 21 65.5 18 65.3 15.7C65 11 64 8 62.2 6.4H44.6z" fill="#b80c18"/><g stroke="#121212" stroke-width="3.2" fill="none" stroke-linecap="butt"><path d="M96.5 2V29.5H108"/><path d="M109.5 2V29.5"/><path d="M119.5 29.5V2L136 29.5V2"/><path d="M148.5 2.5H138V29H148M138 10.5H146"/><path d="M148 29.5L157.8 2L167.7 29.5M151.5 19H164.5"/><path d="M169.5 29.5V2.5H179C188 2.5 189 16.5 179 16.5H170M177 16.5L194 29"/></g></svg><div class="menu" style="left:820px;top:654.5px;font-size:12.6px;color:#1e1e18;letter-spacing:0.7px;line-height:14px;transform:scaleX(1.0);transform-origin:left">TECHNOLOGY</div><div class="menu" style="left:934px;top:648px;font-size:21.5px;color:#101010;transform:rotate(-90deg);transform-origin:center;line-height:22px">005</div>
</div>
</body></html>
